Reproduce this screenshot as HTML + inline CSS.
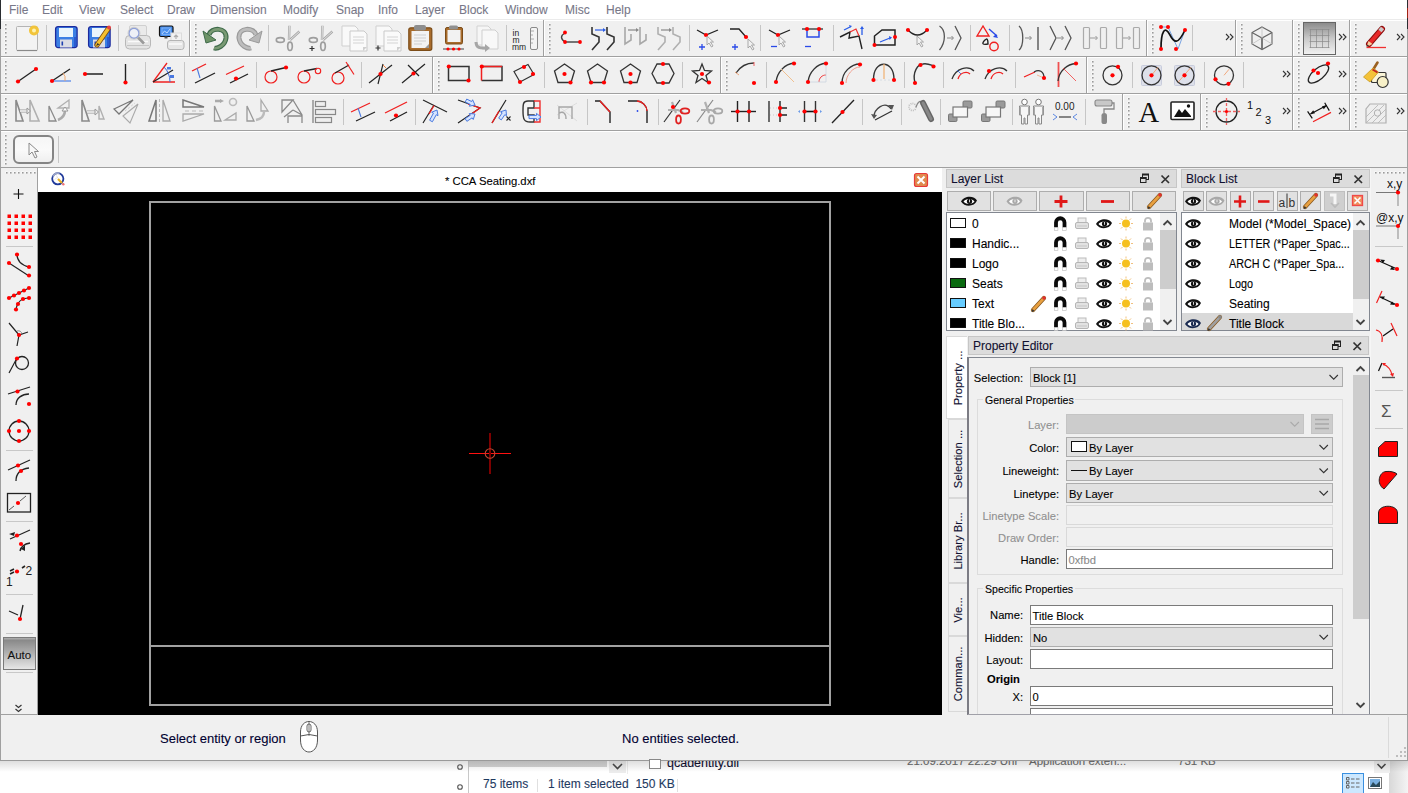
<!DOCTYPE html>
<html><head><meta charset="utf-8"><style>
html,body{margin:0;padding:0;width:1408px;height:793px;overflow:hidden;background:#fff;font-family:"Liberation Sans", sans-serif;-webkit-text-stroke:0.1px currentColor;}
#root{position:relative;width:1408px;height:793px;overflow:hidden;}
svg text{font-family:"Liberation Sans",sans-serif;}
</style></head><body><div id="root">
<div style="position:absolute;left:0px;top:0px;width:1408px;height:19px;background:#fff"></div><div style="position:absolute;left:0px;top:0px;width:1px;height:29px;background:#2a2d31"></div><div style="position:absolute;left:9px;top:3px;white-space:nowrap;font-size:12px;line-height:14px;color:#787888;">File</div><div style="position:absolute;left:42px;top:3px;white-space:nowrap;font-size:12px;line-height:14px;color:#787888;">Edit</div><div style="position:absolute;left:79px;top:3px;white-space:nowrap;font-size:12px;line-height:14px;color:#787888;">View</div><div style="position:absolute;left:120px;top:3px;white-space:nowrap;font-size:12px;line-height:14px;color:#787888;">Select</div><div style="position:absolute;left:167px;top:3px;white-space:nowrap;font-size:12px;line-height:14px;color:#787888;">Draw</div><div style="position:absolute;left:210px;top:3px;white-space:nowrap;font-size:12px;line-height:14px;color:#787888;">Dimension</div><div style="position:absolute;left:283px;top:3px;white-space:nowrap;font-size:12px;line-height:14px;color:#787888;">Modify</div><div style="position:absolute;left:336px;top:3px;white-space:nowrap;font-size:12px;line-height:14px;color:#787888;">Snap</div><div style="position:absolute;left:378px;top:3px;white-space:nowrap;font-size:12px;line-height:14px;color:#787888;">Info</div><div style="position:absolute;left:415px;top:3px;white-space:nowrap;font-size:12px;line-height:14px;color:#787888;">Layer</div><div style="position:absolute;left:459px;top:3px;white-space:nowrap;font-size:12px;line-height:14px;color:#787888;">Block</div><div style="position:absolute;left:505px;top:3px;white-space:nowrap;font-size:12px;line-height:14px;color:#787888;">Window</div><div style="position:absolute;left:565px;top:3px;white-space:nowrap;font-size:12px;line-height:14px;color:#787888;">Misc</div><div style="position:absolute;left:606px;top:3px;white-space:nowrap;font-size:12px;line-height:14px;color:#787888;">Help</div><div style="position:absolute;left:1px;top:19px;width:1407px;height:149px;background:#f0f0f0"></div><div style="position:absolute;left:1px;top:56px;width:1406px;height:1px;background:#a0a0a0"></div><div style="position:absolute;left:1px;top:57px;width:1406px;height:1px;background:#fff"></div><div style="position:absolute;left:1px;top:93px;width:1406px;height:1px;background:#a0a0a0"></div><div style="position:absolute;left:1px;top:94px;width:1406px;height:1px;background:#fff"></div><div style="position:absolute;left:1px;top:130px;width:1406px;height:1px;background:#a0a0a0"></div><div style="position:absolute;left:1px;top:131px;width:1406px;height:1px;background:#fff"></div><div style="position:absolute;left:1px;top:167px;width:1406px;height:1px;background:#a0a0a0"></div><div style="position:absolute;left:1px;top:168px;width:1406px;height:1px;background:#fff"></div><div style="position:absolute;left:1px;top:19px;width:1406px;height:1px;background:#ebebeb"></div><div style="position:absolute;left:1px;top:20px;width:1406px;height:1px;background:#fff"></div><div style="position:absolute;left:0px;top:29px;width:1px;height:731px;background:#a0a0a0"></div><div style="position:absolute;left:1407px;top:0px;width:1px;height:760px;background:#a0a0a0"></div><div style="position:absolute;left:46px;top:25px;width:1px;height:26px;background:#c6c6c6"></div><div style="position:absolute;left:118px;top:25px;width:1px;height:26px;background:#c6c6c6"></div><div style="position:absolute;left:189px;top:20px;width:1px;height:36px;background:#a0a0a0"></div><div style="position:absolute;left:190px;top:20px;width:1px;height:36px;background:#fff"></div><div style="position:absolute;left:268px;top:25px;width:1px;height:26px;background:#c6c6c6"></div><div style="position:absolute;left:506px;top:25px;width:1px;height:26px;background:#c6c6c6"></div><div style="position:absolute;left:543px;top:20px;width:1px;height:36px;background:#a0a0a0"></div><div style="position:absolute;left:544px;top:20px;width:1px;height:36px;background:#fff"></div><div style="position:absolute;left:689px;top:25px;width:1px;height:26px;background:#c6c6c6"></div><div style="position:absolute;left:760px;top:25px;width:1px;height:26px;background:#c6c6c6"></div><div style="position:absolute;left:833px;top:25px;width:1px;height:26px;background:#c6c6c6"></div><div style="position:absolute;left:970px;top:25px;width:1px;height:26px;background:#c6c6c6"></div><div style="position:absolute;left:1009px;top:25px;width:1px;height:26px;background:#c6c6c6"></div><div style="position:absolute;left:1146px;top:20px;width:1px;height:36px;background:#a0a0a0"></div><div style="position:absolute;left:1147px;top:20px;width:1px;height:36px;background:#fff"></div><div style="position:absolute;left:1192px;top:25px;width:1px;height:26px;background:#c6c6c6"></div><div style="position:absolute;left:1235px;top:20px;width:1px;height:36px;background:#a0a0a0"></div><div style="position:absolute;left:1236px;top:20px;width:1px;height:36px;background:#fff"></div><div style="position:absolute;left:1292px;top:20px;width:1px;height:36px;background:#a0a0a0"></div><div style="position:absolute;left:1293px;top:20px;width:1px;height:36px;background:#fff"></div><div style="position:absolute;left:1349px;top:20px;width:1px;height:36px;background:#a0a0a0"></div><div style="position:absolute;left:1350px;top:20px;width:1px;height:36px;background:#fff"></div><div style="position:absolute;left:145px;top:62px;width:1px;height:26px;background:#c6c6c6"></div><div style="position:absolute;left:184px;top:62px;width:1px;height:26px;background:#c6c6c6"></div><div style="position:absolute;left:256px;top:62px;width:1px;height:26px;background:#c6c6c6"></div><div style="position:absolute;left:361px;top:62px;width:1px;height:26px;background:#c6c6c6"></div><div style="position:absolute;left:432px;top:57px;width:1px;height:36px;background:#a0a0a0"></div><div style="position:absolute;left:433px;top:57px;width:1px;height:36px;background:#fff"></div><div style="position:absolute;left:544px;top:62px;width:1px;height:26px;background:#c6c6c6"></div><div style="position:absolute;left:682px;top:62px;width:1px;height:26px;background:#c6c6c6"></div><div style="position:absolute;left:720px;top:57px;width:1px;height:36px;background:#a0a0a0"></div><div style="position:absolute;left:721px;top:57px;width:1px;height:36px;background:#fff"></div><div style="position:absolute;left:766px;top:62px;width:1px;height:26px;background:#c6c6c6"></div><div style="position:absolute;left:904px;top:62px;width:1px;height:26px;background:#c6c6c6"></div><div style="position:absolute;left:943px;top:62px;width:1px;height:26px;background:#c6c6c6"></div><div style="position:absolute;left:1015px;top:62px;width:1px;height:26px;background:#c6c6c6"></div><div style="position:absolute;left:1086px;top:57px;width:1px;height:36px;background:#a0a0a0"></div><div style="position:absolute;left:1087px;top:57px;width:1px;height:36px;background:#fff"></div><div style="position:absolute;left:1132px;top:62px;width:1px;height:26px;background:#c6c6c6"></div><div style="position:absolute;left:1204px;top:62px;width:1px;height:26px;background:#c6c6c6"></div><div style="position:absolute;left:1243px;top:62px;width:1px;height:26px;background:#c6c6c6"></div><div style="position:absolute;left:1292px;top:57px;width:1px;height:36px;background:#a0a0a0"></div><div style="position:absolute;left:1293px;top:57px;width:1px;height:36px;background:#fff"></div><div style="position:absolute;left:1349px;top:57px;width:1px;height:36px;background:#a0a0a0"></div><div style="position:absolute;left:1350px;top:57px;width:1px;height:36px;background:#fff"></div><div style="position:absolute;left:343px;top:99px;width:1px;height:26px;background:#c6c6c6"></div><div style="position:absolute;left:415px;top:99px;width:1px;height:26px;background:#c6c6c6"></div><div style="position:absolute;left:587px;top:99px;width:1px;height:26px;background:#c6c6c6"></div><div style="position:absolute;left:658px;top:99px;width:1px;height:26px;background:#c6c6c6"></div><div style="position:absolute;left:862px;top:99px;width:1px;height:26px;background:#c6c6c6"></div><div style="position:absolute;left:901px;top:99px;width:1px;height:26px;background:#c6c6c6"></div><div style="position:absolute;left:940px;top:99px;width:1px;height:26px;background:#c6c6c6"></div><div style="position:absolute;left:1012px;top:99px;width:1px;height:26px;background:#c6c6c6"></div><div style="position:absolute;left:1085px;top:99px;width:1px;height:26px;background:#c6c6c6"></div><div style="position:absolute;left:1122px;top:94px;width:1px;height:36px;background:#a0a0a0"></div><div style="position:absolute;left:1123px;top:94px;width:1px;height:36px;background:#fff"></div><div style="position:absolute;left:1200px;top:94px;width:1px;height:36px;background:#a0a0a0"></div><div style="position:absolute;left:1201px;top:94px;width:1px;height:36px;background:#fff"></div><div style="position:absolute;left:1292px;top:94px;width:1px;height:36px;background:#a0a0a0"></div><div style="position:absolute;left:1293px;top:94px;width:1px;height:36px;background:#fff"></div><div style="position:absolute;left:1349px;top:94px;width:1px;height:36px;background:#a0a0a0"></div><div style="position:absolute;left:1350px;top:94px;width:1px;height:36px;background:#fff"></div><div style="position:absolute;left:13px;top:135px;width:41px;height:29px;box-sizing:border-box;border:2px solid #858585;border-radius:6px;background:linear-gradient(#f6f6f6,#fafafa 50%,#efefef)"></div><div style="position:absolute;left:58px;top:136px;width:1px;height:27px;background:#c6c6c6"></div><div style="position:absolute;left:1px;top:168px;width:36px;height:547px;background:#f0f0f0"></div><div style="position:absolute;left:37px;top:168px;width:1px;height:547px;background:#a0a0a0"></div><div style="position:absolute;left:6px;top:246px;width:27px;height:1px;background:#c8c8c8"></div><div style="position:absolute;left:6px;top:450px;width:27px;height:1px;background:#c8c8c8"></div><div style="position:absolute;left:6px;top:521px;width:27px;height:1px;background:#c8c8c8"></div><div style="position:absolute;left:6px;top:594px;width:27px;height:1px;background:#c8c8c8"></div><div style="position:absolute;left:6px;top:633px;width:27px;height:1px;background:#c8c8c8"></div><div style="position:absolute;left:3px;top:637px;width:33px;height:33px;box-sizing:border-box;border:1px solid #7a7a7a;background:linear-gradient(#b0b0b0,#8a8a8a 8%,#a8a8a8 40%,#e6e6e6)"></div><div style="position:absolute;left:7.5px;top:648.5px;white-space:nowrap;font-size:11.5px;line-height:13.5px;color:#111;">Auto</div><div style="position:absolute;left:6px;top:672px;width:27px;height:1px;background:#c8c8c8"></div><div style="position:absolute;left:1px;top:714px;width:37px;height:1px;background:#a0a0a0"></div><div style="position:absolute;left:38px;top:168px;width:904px;height:24px;background:#fff"></div><div style="position:absolute;left:942px;top:168px;width:4px;height:547px;background:#f0f0f0"></div><div style="position:absolute;left:38px;top:192px;width:904px;height:523px;background:#000"></div><div style="position:absolute;left:445px;top:175px;white-space:nowrap;font-size:11.3px;line-height:13.3px;color:#000;">* CCA Seating.dxf</div><div style="position:absolute;left:149px;top:201px;width:682px;height:505px;box-sizing:border-box;border:2px solid #a2a2a2"></div><div style="position:absolute;left:151px;top:645px;width:678px;height:2px;background:#a2a2a2"></div><div style="position:absolute;left:469px;top:453px;width:42px;height:1px;background:#ff1010"></div><div style="position:absolute;left:489px;top:433px;width:2px;height:41px;background:#7c0000"></div><div style="position:absolute;left:942px;top:168px;width:429px;height:547px;background:#f0f0f0"></div><div style="position:absolute;left:946px;top:169px;width:231px;height:19px;box-sizing:border-box;border:1px solid #c6c6c6;background:#dcdcdc"></div><div style="position:absolute;left:951px;top:172px;white-space:nowrap;font-size:12px;line-height:14px;color:#101030;">Layer List</div><div style="position:absolute;left:1181px;top:169px;width:189px;height:19px;box-sizing:border-box;border:1px solid #c6c6c6;background:#dcdcdc"></div><div style="position:absolute;left:1186px;top:172px;white-space:nowrap;font-size:12px;line-height:14px;color:#101030;">Block List</div><div style="position:absolute;left:947px;top:191px;width:44px;height:20px;box-sizing:border-box;border:1px solid #adadad;background:#e1e1e1"></div><div style="position:absolute;left:993px;top:191px;width:44px;height:20px;box-sizing:border-box;border:1px solid #adadad;background:#e1e1e1"></div><div style="position:absolute;left:1039px;top:191px;width:45px;height:20px;box-sizing:border-box;border:1px solid #adadad;background:#e1e1e1"></div><div style="position:absolute;left:1086px;top:191px;width:44px;height:20px;box-sizing:border-box;border:1px solid #adadad;background:#e1e1e1"></div><div style="position:absolute;left:1132px;top:191px;width:44px;height:20px;box-sizing:border-box;border:1px solid #adadad;background:#e1e1e1"></div><div style="position:absolute;left:946px;top:212px;width:231px;height:119px;box-sizing:border-box;border:1px solid #828790;background:#fff"></div><div style="position:absolute;left:1160px;top:213px;width:16px;height:117px;background:#f0f0f0"></div><div style="position:absolute;left:1160px;top:230px;width:16px;height:59px;background:#cdcdcd"></div><div style="position:absolute;left:972px;top:216.5px;white-space:nowrap;font-size:12px;line-height:14px;color:#000;">0</div><div style="position:absolute;left:972px;top:236.5px;white-space:nowrap;font-size:12px;line-height:14px;color:#000;">Handic...</div><div style="position:absolute;left:972px;top:256.5px;white-space:nowrap;font-size:12px;line-height:14px;color:#000;">Logo</div><div style="position:absolute;left:972px;top:276.5px;white-space:nowrap;font-size:12px;line-height:14px;color:#000;">Seats</div><div style="position:absolute;left:972px;top:296.5px;white-space:nowrap;font-size:12px;line-height:14px;color:#000;">Text</div><div style="position:absolute;left:972px;top:316.5px;white-space:nowrap;font-size:12px;line-height:14px;color:#000;">Title Blo...</div><div style="position:absolute;left:1183px;top:191px;width:21px;height:20px;box-sizing:border-box;border:1px solid #adadad;background:#e1e1e1"></div><div style="position:absolute;left:1206px;top:191px;width:21px;height:20px;box-sizing:border-box;border:1px solid #adadad;background:#e1e1e1"></div><div style="position:absolute;left:1230px;top:191px;width:21px;height:20px;box-sizing:border-box;border:1px solid #adadad;background:#e1e1e1"></div><div style="position:absolute;left:1253px;top:191px;width:21px;height:20px;box-sizing:border-box;border:1px solid #adadad;background:#e1e1e1"></div><div style="position:absolute;left:1277px;top:191px;width:21px;height:20px;box-sizing:border-box;border:1px solid #adadad;background:#e1e1e1"></div><div style="position:absolute;left:1300px;top:191px;width:21px;height:20px;box-sizing:border-box;border:1px solid #adadad;background:#e1e1e1"></div><div style="position:absolute;left:1324px;top:191px;width:21px;height:20px;box-sizing:border-box;border:1px solid #c0c0c0;background:#cfcfcf"></div><div style="position:absolute;left:1347px;top:191px;width:21px;height:20px;box-sizing:border-box;border:1px solid #adadad;background:#e1e1e1"></div><div style="position:absolute;left:1181px;top:212px;width:189px;height:119px;box-sizing:border-box;border:1px solid #828790;background:#fff"></div><div style="position:absolute;left:1353px;top:213px;width:16px;height:117px;background:#f0f0f0"></div><div style="position:absolute;left:1353px;top:230px;width:16px;height:69px;background:#cdcdcd"></div><div style="position:absolute;left:1182px;top:313px;width:171px;height:17px;background:#d9d9d9"></div><div style="position:absolute;left:1229px;top:216.5px;white-space:nowrap;font-size:12px;line-height:14px;color:#000;">Model (*Model_Space)</div><div style="position:absolute;left:1229px;top:236.5px;white-space:nowrap;font-size:12px;line-height:14px;color:#000;transform:scaleX(0.9);transform-origin:0 0;">LETTER (*Paper_Spac...</div><div style="position:absolute;left:1229px;top:256.5px;white-space:nowrap;font-size:12px;line-height:14px;color:#000;transform:scaleX(0.9);transform-origin:0 0;">ARCH C (*Paper_Spa...</div><div style="position:absolute;left:1229px;top:276.5px;white-space:nowrap;font-size:12px;line-height:14px;color:#000;transform:scaleX(0.9);transform-origin:0 0;">Logo</div><div style="position:absolute;left:1229px;top:296.5px;white-space:nowrap;font-size:12px;line-height:14px;color:#000;">Seating</div><div style="position:absolute;left:1229px;top:316.5px;white-space:nowrap;font-size:12px;line-height:14px;color:#000;">Title Block</div><div style="position:absolute;left:946px;top:336px;width:21px;height:83px;box-sizing:border-box;border:1px solid #d9d9d9;border-right:none;background:#fff"></div><div style="position:absolute;left:957.5px;top:377.5px;width:0;height:0"><div style="position:absolute;left:0;top:0;transform:translate(-50%,-50%) rotate(-90deg);white-space:nowrap;font-size:11.2px;line-height:13px;color:#101030">Property ...</div></div><div style="position:absolute;left:948px;top:419px;width:19px;height:79px;box-sizing:border-box;border:1px solid #d9d9d9;border-right:none;background:#f0f0f0"></div><div style="position:absolute;left:957.5px;top:458.5px;width:0;height:0"><div style="position:absolute;left:0;top:0;transform:translate(-50%,-50%) rotate(-90deg);white-space:nowrap;font-size:11.2px;line-height:13px;color:#101030">Selection ...</div></div><div style="position:absolute;left:948px;top:498px;width:19px;height:85px;box-sizing:border-box;border:1px solid #d9d9d9;border-right:none;background:#f0f0f0"></div><div style="position:absolute;left:957.5px;top:540.5px;width:0;height:0"><div style="position:absolute;left:0;top:0;transform:translate(-50%,-50%) rotate(-90deg);white-space:nowrap;font-size:11.2px;line-height:13px;color:#101030">Library Br...</div></div><div style="position:absolute;left:948px;top:583px;width:19px;height:53px;box-sizing:border-box;border:1px solid #d9d9d9;border-right:none;background:#f0f0f0"></div><div style="position:absolute;left:957.5px;top:609.5px;width:0;height:0"><div style="position:absolute;left:0;top:0;transform:translate(-50%,-50%) rotate(-90deg);white-space:nowrap;font-size:11.2px;line-height:13px;color:#101030">Vie...</div></div><div style="position:absolute;left:948px;top:636px;width:19px;height:76px;box-sizing:border-box;border:1px solid #d9d9d9;border-right:none;background:#f0f0f0"></div><div style="position:absolute;left:957.5px;top:674.0px;width:0;height:0"><div style="position:absolute;left:0;top:0;transform:translate(-50%,-50%) rotate(-90deg);white-space:nowrap;font-size:11.2px;line-height:13px;color:#101030">Comman...</div></div><div style="position:absolute;left:968px;top:336px;width:401px;height:19px;box-sizing:border-box;border:1px solid #c6c6c6;background:#dcdcdc"></div><div style="position:absolute;left:973px;top:339px;white-space:nowrap;font-size:12px;line-height:14px;color:#101030;">Property Editor</div><div style="position:absolute;left:967px;top:357px;width:403px;height:358px;box-sizing:border-box;border:1px solid #828790;border-left:2px solid #7c7c84;border-bottom:1px solid #a0a0a8;background:#f0f0f0"></div><div style="position:absolute;left:1353px;top:358px;width:16px;height:356px;background:#f0f0f0"></div><div style="position:absolute;left:1353px;top:375px;width:16px;height:244px;background:#cdcdcd"></div><div style="position:absolute;right:385px;top:372px;white-space:nowrap;font-size:11.2px;line-height:13px;color:#000;">Selection:</div><div style="position:absolute;left:1030px;top:367px;width:313px;height:20px;box-sizing:border-box;border:1px solid #adadad;background:#e1e1e1"></div><div style="position:absolute;left:1033px;top:372px;white-space:nowrap;font-size:11.2px;line-height:13.2px;color:#000;">Block [1]</div><div style="position:absolute;left:977px;top:399px;width:366px;height:176px;box-sizing:border-box;border:1px solid #dcdcdc"></div><div style="position:absolute;left:983px;top:392px;width:92px;height:14px;background:#f0f0f0"></div><div style="position:absolute;left:985px;top:394px;white-space:nowrap;font-size:11.2px;line-height:13.2px;color:#000;transform:scaleX(0.945);transform-origin:0 0;">General Properties</div><div style="position:absolute;right:349px;top:419px;white-space:nowrap;font-size:11.2px;line-height:13px;color:#909090;">Layer:</div><div style="position:absolute;left:1066px;top:414px;width:238px;height:20px;box-sizing:border-box;border:1px solid #c4c4c4;background:#cccccc"></div><div style="position:absolute;left:1311px;top:414px;width:22px;height:20px;box-sizing:border-box;border:1px solid #c4c4c4;background:#cccccc"></div><div style="position:absolute;right:349px;top:442px;white-space:nowrap;font-size:11.2px;line-height:13px;color:#000;">Color:</div><div style="position:absolute;left:1066px;top:437px;width:267px;height:20px;box-sizing:border-box;border:1px solid #adadad;background:#e1e1e1"></div><div style="position:absolute;left:1089px;top:442px;white-space:nowrap;font-size:11.2px;line-height:13.2px;color:#000;">By Layer</div><div style="position:absolute;right:349px;top:465px;white-space:nowrap;font-size:11.2px;line-height:13px;color:#000;">Lineweight:</div><div style="position:absolute;left:1066px;top:460px;width:267px;height:21px;box-sizing:border-box;border:1px solid #adadad;background:#e1e1e1"></div><div style="position:absolute;left:1089px;top:465px;white-space:nowrap;font-size:11.2px;line-height:13.2px;color:#000;">By Layer</div><div style="position:absolute;right:349px;top:488px;white-space:nowrap;font-size:11.2px;line-height:13px;color:#000;">Linetype:</div><div style="position:absolute;left:1066px;top:483px;width:267px;height:20px;box-sizing:border-box;border:1px solid #adadad;background:#e1e1e1"></div><div style="position:absolute;left:1069px;top:488px;white-space:nowrap;font-size:11.2px;line-height:13.2px;color:#000;">By Layer</div><div style="position:absolute;right:349px;top:510px;white-space:nowrap;font-size:11.2px;line-height:13px;color:#909090;">Linetype Scale:</div><div style="position:absolute;left:1066px;top:505px;width:267px;height:20px;box-sizing:border-box;border:1px solid #d9d9d9;background:#f0f0f0"></div><div style="position:absolute;right:349px;top:532px;white-space:nowrap;font-size:11.2px;line-height:13px;color:#909090;">Draw Order:</div><div style="position:absolute;left:1066px;top:527px;width:267px;height:20px;box-sizing:border-box;border:1px solid #d9d9d9;background:#f0f0f0"></div><div style="position:absolute;right:349px;top:554px;white-space:nowrap;font-size:11.2px;line-height:13px;color:#000;">Handle:</div><div style="position:absolute;left:1066px;top:549px;width:267px;height:20px;box-sizing:border-box;border:1px solid #7a7a7a;background:#fff"></div><div style="position:absolute;left:1068.5px;top:554px;white-space:nowrap;font-size:11.2px;line-height:13.2px;color:#8a8a8a;">0xfbd</div><div style="position:absolute;left:977px;top:588px;width:366px;height:130px;box-sizing:border-box;border:1px solid #dcdcdc;border-bottom:none"></div><div style="position:absolute;left:983px;top:581px;width:92px;height:14px;background:#f0f0f0"></div><div style="position:absolute;left:985px;top:583px;white-space:nowrap;font-size:11.2px;line-height:13.2px;color:#000;transform:scaleX(0.945);transform-origin:0 0;">Specific Properties</div><div style="position:absolute;right:385px;top:609px;white-space:nowrap;font-size:11.2px;line-height:13px;color:#000;">Name:</div><div style="position:absolute;left:1030px;top:605px;width:303px;height:20px;box-sizing:border-box;border:1px solid #7a7a7a;background:#fff"></div><div style="position:absolute;left:1032.5px;top:610px;white-space:nowrap;font-size:11.2px;line-height:13.2px;color:#000;">Title Block</div><div style="position:absolute;right:385px;top:632px;white-space:nowrap;font-size:11.2px;line-height:13px;color:#000;">Hidden:</div><div style="position:absolute;left:1030px;top:627px;width:303px;height:20px;box-sizing:border-box;border:1px solid #adadad;background:#e1e1e1"></div><div style="position:absolute;left:1033px;top:632px;white-space:nowrap;font-size:11.2px;line-height:13.2px;color:#000;">No</div><div style="position:absolute;right:385px;top:654px;white-space:nowrap;font-size:11.2px;line-height:13px;color:#000;">Layout:</div><div style="position:absolute;left:1030px;top:649px;width:303px;height:20px;box-sizing:border-box;border:1px solid #7a7a7a;background:#fff"></div><div style="position:absolute;left:987px;top:673px;white-space:nowrap;font-size:11.2px;line-height:13.2px;color:#000;font-weight:bold">Origin</div><div style="position:absolute;right:385px;top:691px;white-space:nowrap;font-size:11.2px;line-height:13px;color:#000;">X:</div><div style="position:absolute;left:1030px;top:686px;width:303px;height:20px;box-sizing:border-box;border:1px solid #7a7a7a;background:#fff"></div><div style="position:absolute;left:1032.5px;top:691px;white-space:nowrap;font-size:11.2px;line-height:13.2px;color:#000;">0</div><div style="position:absolute;left:1030px;top:708px;width:303px;height:10px;box-sizing:border-box;border:1px solid #7a7a7a;background:#fff"></div><div style="position:absolute;left:968px;top:714px;width:402px;height:1px;background:#a0a0a8"></div><div style="position:absolute;left:1371px;top:168px;width:36px;height:547px;background:#f0f0f0"></div><div style="position:absolute;left:1370px;top:168px;width:1px;height:547px;background:#f6f6f6"></div><div style="position:absolute;left:1375px;top:246px;width:28px;height:1px;background:#c8c8c8"></div><div style="position:absolute;left:1375px;top:390px;width:28px;height:1px;background:#c8c8c8"></div><div style="position:absolute;left:1375px;top:428px;width:28px;height:1px;background:#c8c8c8"></div><div style="position:absolute;left:1370px;top:714px;width:37px;height:1px;background:#a0a0a0"></div><div style="position:absolute;left:1px;top:715px;width:1406px;height:45px;background:#f0f0f0"></div><div style="position:absolute;left:0px;top:760px;width:1408px;height:1px;background:#9a9a9a"></div><div style="position:absolute;left:160px;top:731px;white-space:nowrap;font-size:13px;line-height:15px;color:#000030;">Select entity or region</div><div style="position:absolute;left:622px;top:731px;white-space:nowrap;font-size:13px;line-height:15px;color:#000030;">No entities selected.</div><div style="position:absolute;left:1388px;top:717px;width:1px;height:41px;background:#dadada"></div><div style="position:absolute;left:0;top:761px;width:1408px;height:32px;overflow:hidden"><div style="position:absolute;left:0px;top:-1px;width:1408px;height:33px;background:#fff"></div><div style="position:absolute;left:469px;top:-1px;width:138px;height:7px;background:#d4d4d4"></div><div style="position:absolute;left:609px;top:-1px;width:17px;height:13px;background:#ececec"></div><div style="position:absolute;left:468px;top:-1px;width:1px;height:33px;background:#c8c8c8"></div><div style="position:absolute;left:627px;top:-1px;width:1px;height:14px;background:#ececec"></div><div style="position:absolute;left:667px;top:-5px;white-space:nowrap;font-size:12.5px;line-height:14.5px;color:#101030">qcadentity.dll</div><div style="position:absolute;left:907px;top:-6px;white-space:nowrap;font-size:11.5px;line-height:13.5px;color:#6d6d6d">21.09.2017 22:29 Uhr</div><div style="position:absolute;left:1029px;top:-6px;white-space:nowrap;font-size:11.5px;line-height:13.5px;color:#6d6d6d">Application exten...</div><div style="position:absolute;left:1178px;top:-6px;white-space:nowrap;font-size:11.5px;line-height:13.5px;color:#6d6d6d">731 KB</div><div style="position:absolute;left:483px;top:16px;white-space:nowrap;font-size:12px;line-height:14px;color:#1e3a5f">75 items</div><div style="position:absolute;left:537px;top:18px;width:1px;height:13px;background:#e0e0e0"></div><div style="position:absolute;left:548px;top:16px;white-space:nowrap;font-size:12px;line-height:14px;color:#1e3a5f">1 item selected&nbsp; 150 KB</div><div style="position:absolute;left:677px;top:18px;width:1px;height:13px;background:#e0e0e0"></div><div style="position:absolute;left:1389px;top:-1px;width:19px;height:33px;background:linear-gradient(90deg,#d8d8d8,#f4f4f4)"></div><div style="position:absolute;left:1374px;top:-1px;width:16px;height:13px;background:#efefef"></div><div style="position:absolute;left:0px;top:-1px;width:1408px;height:12px;background:linear-gradient(rgba(0,0,0,0.14),rgba(0,0,0,0))"></div></div><div style="position:absolute;left:1407px;top:0px;width:1px;height:29px;background:#2a2d31"></div><div style="position:absolute;left:1407px;top:8px;width:1px;height:10px;background:#a02414"></div>
<svg width="1408" height="793" style="position:absolute;left:0;top:0"><rect x="4.5" y="23.5" width="2" height="2" fill="#fff"/><rect x="5" y="24" width="1.6" height="1.6" fill="#9a9a9a"/><rect x="4.5" y="27.5" width="2" height="2" fill="#fff"/><rect x="5" y="28" width="1.6" height="1.6" fill="#9a9a9a"/><rect x="4.5" y="31.5" width="2" height="2" fill="#fff"/><rect x="5" y="32" width="1.6" height="1.6" fill="#9a9a9a"/><rect x="4.5" y="35.5" width="2" height="2" fill="#fff"/><rect x="5" y="36" width="1.6" height="1.6" fill="#9a9a9a"/><rect x="4.5" y="39.5" width="2" height="2" fill="#fff"/><rect x="5" y="40" width="1.6" height="1.6" fill="#9a9a9a"/><rect x="4.5" y="43.5" width="2" height="2" fill="#fff"/><rect x="5" y="44" width="1.6" height="1.6" fill="#9a9a9a"/><rect x="4.5" y="47.5" width="2" height="2" fill="#fff"/><rect x="5" y="48" width="1.6" height="1.6" fill="#9a9a9a"/><rect x="4.5" y="51.5" width="2" height="2" fill="#fff"/><rect x="5" y="52" width="1.6" height="1.6" fill="#9a9a9a"/><g transform="translate(15,25)"><rect x="1.5" y="1.5" width="21" height="24" rx="1" fill="#f3f3f3" stroke="#b4b4b4"/><line x1="2" y1="25.5" x2="22" y2="25.5" stroke="#8a8a8a" stroke-width="1.2"/><circle cx="19" cy="5.5" r="5" fill="#f2c43a"/><circle cx="19" cy="5.5" r="2" fill="#fff3b0"/></g><g transform="translate(55,25)"><rect x="0.6" y="1.6" width="21.5" height="21" rx="2.5" fill="#3b7fe4" stroke="#1c2a9e" stroke-width="1.3"/><rect x="4" y="3" width="14" height="9" fill="#eaf5fc"/><rect x="5" y="14.5" width="12" height="8" fill="#dcdce4"/><rect x="6.5" y="16.5" width="1.6" height="4" fill="#2040b0"/><rect x="19" y="12" width="2" height="10" fill="#2a5ad0"/></g><g transform="translate(88,25)"><rect x="0.6" y="1.6" width="21.5" height="21" rx="2.5" fill="#3b7fe4" stroke="#1c2a9e" stroke-width="1.3"/><rect x="4" y="3" width="14" height="9" fill="#eaf5fc"/><rect x="5" y="14.5" width="12" height="8" fill="#dcdce4"/><rect x="6.5" y="16.5" width="1.6" height="4" fill="#2040b0"/><rect x="19" y="12" width="2" height="10" fill="#2a5ad0"/><path d="M9 20 L20 4" stroke="#7a4a10" stroke-width="5" stroke-linecap="round"/><path d="M9 20 L20 4" stroke="#f4c030" stroke-width="3.4" stroke-linecap="round"/><circle cx="21" cy="2.5" r="2" fill="#e84040"/><path d="M8 21 l1.5 -3 l2 1.5z" fill="#333"/></g><g transform="translate(125,25)"><rect x="4.5" y="0.5" width="17" height="12" rx="1.5" fill="#eaeaea" stroke="#d0d0d0"/><rect x="0.5" y="10.5" width="25" height="13.5" rx="4" fill="#e4e4e4" stroke="#b8b8b8"/><path d="M3 16.5 h20" stroke="#fafafa" stroke-width="1.5"/><path d="M2 20.5 h22" stroke="#c4c4c4" stroke-width="1"/><line x1="12" y1="11.5" x2="19" y2="18.5" stroke="#9a9a9a" stroke-width="2.6"/><circle cx="9" cy="8.2" r="5" fill="#eef0f6" stroke="#8fa0d8" stroke-width="1.4"/><circle cx="9" cy="8.2" r="6" fill="none" stroke="#c8c8c8" stroke-width="0.8"/></g><g transform="translate(159,25)"><rect x="0.5" y="1" width="13.5" height="10.5" rx="1.5" fill="#4a90ee" stroke="#111" stroke-width="1.2"/><path d="M3 9 L5.5 6 L8 8 L11 4" stroke="#c8e0ff" stroke-width="0.9" fill="none"/><rect x="3" y="3" width="8.5" height="6.5" fill="none" stroke="#9cc4f8" stroke-width="0.6"/><rect x="5.5" y="11.5" width="3" height="2" fill="#555"/><rect x="12" y="8" width="10.5" height="8" fill="#f2f2f2" stroke="#dcdcdc"/><path d="M17 14 V10.5 M15 12 l2 -2 l2 2" stroke="#b0b0b0" stroke-width="1.2" fill="none"/><rect x="8.5" y="15.5" width="16.5" height="9" rx="2.5" fill="#e6e6e6" stroke="#b4b4b4"/><path d="M10 19 h13" stroke="#fafafa" stroke-width="1.5"/></g><rect x="194.5" y="23.5" width="2" height="2" fill="#fff"/><rect x="195" y="24" width="1.6" height="1.6" fill="#9a9a9a"/><rect x="194.5" y="27.5" width="2" height="2" fill="#fff"/><rect x="195" y="28" width="1.6" height="1.6" fill="#9a9a9a"/><rect x="194.5" y="31.5" width="2" height="2" fill="#fff"/><rect x="195" y="32" width="1.6" height="1.6" fill="#9a9a9a"/><rect x="194.5" y="35.5" width="2" height="2" fill="#fff"/><rect x="195" y="36" width="1.6" height="1.6" fill="#9a9a9a"/><rect x="194.5" y="39.5" width="2" height="2" fill="#fff"/><rect x="195" y="40" width="1.6" height="1.6" fill="#9a9a9a"/><rect x="194.5" y="43.5" width="2" height="2" fill="#fff"/><rect x="195" y="44" width="1.6" height="1.6" fill="#9a9a9a"/><rect x="194.5" y="47.5" width="2" height="2" fill="#fff"/><rect x="195" y="48" width="1.6" height="1.6" fill="#9a9a9a"/><rect x="194.5" y="51.5" width="2" height="2" fill="#fff"/><rect x="195" y="52" width="1.6" height="1.6" fill="#9a9a9a"/><g transform="translate(203,25)"><path d="M6 10 C 8 2, 24 2, 23 13 C 22 21, 14 24, 11 23" stroke="#3e6a4a" stroke-width="5" fill="none"/><path d="M6 10 C 8 2, 24 2, 23 13 C 22 21, 14 24, 11 23" stroke="#7a9a74" stroke-width="2.6" fill="none"/><path d="M0 6 L3 18 L13 15z" fill="#6e9468" stroke="#3e6a4a" stroke-width="1"/></g><g transform="translate(236,25)"><path d="M20 10 C 18 2, 2 2, 3 13 C 4 21, 12 24, 15 23" stroke="#9a9a9a" stroke-width="5" fill="none"/><path d="M20 10 C 18 2, 2 2, 3 13 C 4 21, 12 24, 15 23" stroke="#bdbdbd" stroke-width="2.6" fill="none"/><path d="M26 6 L23 18 L13 15z" fill="#b8b8b8" stroke="#9a9a9a" stroke-width="1"/></g><g transform="translate(276,25)"><path d="M13.4 0.8 L13 15 M23.4 6.5 L14 15" stroke="#a8a8a8" stroke-width="2.4"/><path d="M13.4 0.8 L13 15 M23.4 6.5 L14 15" stroke="#f0f0f0" stroke-width="0.8"/><ellipse cx="4.3" cy="15" rx="4" ry="2.4" stroke="#9e9e9e" stroke-width="1.7" fill="none"/><ellipse cx="14" cy="21.3" rx="2.3" ry="4.2" stroke="#9e9e9e" stroke-width="1.7" fill="none"/></g><g transform="translate(309,25)"><path d="M13.4 0.8 L13 15 M23.4 6.5 L14 15" stroke="#a8a8a8" stroke-width="2.4"/><path d="M13.4 0.8 L13 15 M23.4 6.5 L14 15" stroke="#f0f0f0" stroke-width="0.8"/><ellipse cx="4.3" cy="15" rx="4" ry="2.4" stroke="#9e9e9e" stroke-width="1.7" fill="none"/><ellipse cx="14" cy="21.3" rx="2.3" ry="4.2" stroke="#9e9e9e" stroke-width="1.7" fill="none"/><path d="M0.5 23.5 h5 M3 21 v5" stroke="#333" stroke-width="1.2"/></g><g transform="translate(341,25)"><path d="M1 1 h13 l3 3 v17 h-16z" fill="#f9f9f9" stroke="#cfcfcf"/><path d="M9 6 h14 l3 3 v17 h-17z" fill="#fafafa" stroke="#c9c9c9"/><path d="M12 12 h11 M12 15 h11 M12 18 h11" stroke="#d4d4d4"/><path d="M22 26 l4 -4 h-4z" fill="#cfcfcf"/></g><g transform="translate(375,25)"><path d="M1 1 h13 l3 3 v17 h-16z" fill="#f9f9f9" stroke="#cfcfcf"/><path d="M9 6 h14 l3 3 v17 h-17z" fill="#fafafa" stroke="#c9c9c9"/><path d="M12 12 h11 M12 15 h11 M12 18 h11" stroke="#d4d4d4"/><path d="M22 26 l4 -4 h-4z" fill="#cfcfcf"/><path d="M0.5 23 h5 M3 20.5 v5" stroke="#333" stroke-width="1.2"/></g><g transform="translate(408,25)"><rect x="0.8" y="2.8" width="23" height="22.5" rx="2" fill="#a86c2c" stroke="#7c4c18" stroke-width="1.2"/><rect x="3.5" y="6" width="17.5" height="17" fill="#f3f3f3"/><path d="M6 10 h12 M6 13 h12 M6 16 h12 M6 19 h8" stroke="#cfcfcf"/><rect x="6" y="0" width="12" height="5.5" rx="2" fill="#8e8e8e"/><path d="M21 23 l-4 0 l4 -4z" fill="#999"/></g><g transform="translate(443,25)"><rect x="2.5" y="2.5" width="17" height="16.5" rx="1.5" fill="#a86c2c" stroke="#7c4c18"/><rect x="4.5" y="5" width="13" height="12" fill="#f2f2f2"/><rect x="6" y="0.5" width="9" height="4" rx="1.5" fill="#909090"/><line x1="0" y1="24" x2="21" y2="24" stroke="#444"/><circle cx="5" cy="24" r="1.6" fill="#f00"/><circle cx="10.5" cy="24" r="1.6" fill="#f00"/><circle cx="16" cy="24" r="1.6" fill="#f00"/></g><g transform="translate(474,25)"><path d="M3 1 h11 l3 3 v16 h-14z" fill="#f6f6f6" stroke="#d2d2d2"/><path d="M8 5 h13 l3 3 v16 h-16z" fill="#f8f8f8" stroke="#cfcfcf"/><path d="M2 17 C2 24, 8 23, 12 23" stroke="#a6a6a6" stroke-width="3" fill="none"/><path d="M11 19 l5 4 l-5 4z" fill="#a6a6a6"/></g><text x="512.5" y="36" font-size="8.5" font-family="Liberation Sans" fill="#222">in</text><text x="512.5" y="43" font-size="8.5" font-family="Liberation Sans" fill="#222">m</text><text x="512" y="50" font-size="8.5" font-family="Liberation Sans" fill="#222">mm</text><g transform="translate(530,25)"><rect x="0.5" y="2.5" width="7" height="22" rx="1.5" fill="#f4f4f4" stroke="#8a8a8a"/><path d="M1 6 h3 M1 10 h2 M1 14 h3 M1 18 h2" stroke="#9a9a9a" stroke-width="0.8"/></g><rect x="548.5" y="23.5" width="2" height="2" fill="#fff"/><rect x="549" y="24" width="1.6" height="1.6" fill="#9a9a9a"/><rect x="548.5" y="27.5" width="2" height="2" fill="#fff"/><rect x="549" y="28" width="1.6" height="1.6" fill="#9a9a9a"/><rect x="548.5" y="31.5" width="2" height="2" fill="#fff"/><rect x="549" y="32" width="1.6" height="1.6" fill="#9a9a9a"/><rect x="548.5" y="35.5" width="2" height="2" fill="#fff"/><rect x="549" y="36" width="1.6" height="1.6" fill="#9a9a9a"/><rect x="548.5" y="39.5" width="2" height="2" fill="#fff"/><rect x="549" y="40" width="1.6" height="1.6" fill="#9a9a9a"/><rect x="548.5" y="43.5" width="2" height="2" fill="#fff"/><rect x="549" y="44" width="1.6" height="1.6" fill="#9a9a9a"/><rect x="548.5" y="47.5" width="2" height="2" fill="#fff"/><rect x="549" y="48" width="1.6" height="1.6" fill="#9a9a9a"/><rect x="548.5" y="51.5" width="2" height="2" fill="#fff"/><rect x="549" y="52" width="1.6" height="1.6" fill="#9a9a9a"/><g transform="translate(559,25)"><path d="M6 8 Q -1 12 6 17" stroke="#444" stroke-width="1.4" fill="none"/><line x1="6" y1="17" x2="21" y2="17" stroke="#555" stroke-width="1.6"/><circle cx="6" cy="7.5" r="1.9" fill="#f00"/><circle cx="6" cy="17" r="1.9" fill="#f00"/><circle cx="21" cy="17" r="1.9" fill="#f00"/></g><g transform="translate(591,25)"><path d="M1 2 V9 L8 12 V17 L1 25" stroke="#333" stroke-width="1.6" fill="none"/><path d="M16 2 V9 L23 12 V17 L16 25" stroke="#333" stroke-width="1.6" fill="none"/><path d="M4 5 h8" stroke="#2a5ce8" stroke-width="1.2"/><path d="M12 3 l3 2 l-3 2z" fill="#2a5ce8"/></g><g transform="translate(624,25)"><path d="M1 2 V19 l6 -4 V9" stroke="#a8a8a8" stroke-width="1.6" fill="none"/><path d="M16 2 V19 l6 -4 V9" stroke="#a8a8a8" stroke-width="1.6" fill="none"/><path d="M4 5 h8" stroke="#888" stroke-width="1.2"/><path d="M12 3 l3 2 l-3 2z" fill="#888"/></g><g transform="translate(657,25)"><path d="M1 2 V9 L8 12 V17 L1 25" stroke="#b0b0b0" stroke-width="1.6" fill="none"/><path d="M16 2 V9 L23 12 V17 L16 25" stroke="#b0b0b0" stroke-width="1.6" fill="none"/><path d="M4 5 h8" stroke="#888" stroke-width="1.2"/><path d="M12 3 l3 2 l-3 2z" fill="#888"/></g><g transform="translate(697,25)"><path d="M0 5 L9 10 L21 5" stroke="#222" stroke-width="1.3" fill="none"/><circle cx="9" cy="10" r="2.1" fill="#f00"/><path d="M10 11 v9 l2 -2 l2.5 4 l1.5 -1 l-2.5 -4 h3z" fill="#f2f2f2" stroke="#a0a0a0" stroke-width="0.9"/><path d="M2 22 h6 M5 19 v6" stroke="#2a4ae8" stroke-width="1.3"/></g><g transform="translate(730,25)"><path d="M0 4 h9 L16 12" stroke="#222" stroke-width="1.3" fill="none"/><circle cx="16" cy="12" r="2.1" fill="#f00"/><path d="M18 14 v9 l2 -2 l2.5 4 l1.5 -1 l-2.5 -4 h3z" fill="#f2f2f2" stroke="#a0a0a0" stroke-width="0.9"/><path d="M2 22 h6 M5 19 v6" stroke="#2a4ae8" stroke-width="1.3"/></g><g transform="translate(769,25)"><path d="M0 5 L9 10 L21 5" stroke="#222" stroke-width="1.3" fill="none"/><circle cx="9" cy="10" r="2.1" fill="#f00"/><path d="M10 11 v9 l2 -2 l2.5 4 l1.5 -1 l-2.5 -4 h3z" fill="#f2f2f2" stroke="#a0a0a0" stroke-width="0.9"/><path d="M2 21.5 h6" stroke="#2a4ae8" stroke-width="1.3"/></g><g transform="translate(802,25)"><path d="M0 4 h21" stroke="#222" stroke-width="1.2"/><path d="M5 4 V12 H17 V4" stroke="#2a4ae8" stroke-width="1.5" fill="none"/><circle cx="5" cy="4" r="2.1" fill="#f00"/><circle cx="17" cy="4" r="2.1" fill="#f00"/><path d="M3 21.5 h6" stroke="#2a4ae8" stroke-width="1.3"/></g><g transform="translate(839,25)"><path d="M1 12 L11 7 L10 13 L20 11 L23 24" stroke="#222" stroke-width="1.4" fill="none"/><path d="M11 7 L17 4 L20 11" stroke="#f03030" stroke-width="1.2" fill="none"/><path d="M5 5 L11 2" stroke="#2a5ce8" stroke-width="1.3"/><path d="M10 0 l3 1 l-2 2z" fill="#2a5ce8"/><path d="M23 10 V3" stroke="#2a5ce8" stroke-width="1.3"/><path d="M21 4 l2 -3 l2 3z" fill="#2a5ce8"/></g><g transform="translate(874,25)"><path d="M0.5 20 V11 L8 5 H21 V20 Z" stroke="#222" stroke-width="1.5" fill="none"/><path d="M6 17 L16 13" stroke="#2a5ce8" stroke-width="1.2"/><path d="M15 11 l3 1.5 l-2.5 2.5z" fill="#2a5ce8"/><circle cx="0.5" cy="20" r="2" fill="#f00"/><circle cx="21" cy="12" r="2" fill="#f00"/></g><g transform="translate(906,25)"><path d="M0 5 h3 M20 5 h3" stroke="#222"/><path d="M2 5 Q11.5 15 21 5" stroke="#222" stroke-width="1.3" fill="none"/><circle cx="2" cy="5" r="2" fill="#f00"/><circle cx="21" cy="5" r="2" fill="#f00"/><path d="M11 11 v9 l2 -2 l2.5 4 l1.5 -1 l-2.5 -4 h3z" fill="#f2f2f2" stroke="#a0a0a0" stroke-width="0.9"/></g><g transform="translate(938,25)"><path d="M1.5 1 C 8 5, 8 17, 1.5 25" stroke="#555" stroke-width="1.3" fill="none"/><path d="M17 1 L23 13 L17 25" stroke="#555" stroke-width="1.3" fill="none"/><path d="M9 13 h6" stroke="#888"/><path d="M13.5 11 l2 2 l-2 2" stroke="#888" fill="none"/></g><g transform="translate(976,25)"><path d="M1 11 L7 1 L13 11 Z" stroke="#f02020" stroke-width="1.4" fill="none"/><path d="M13 4 L21 11" stroke="#2a4ae8" stroke-width="1.4"/><path d="M22 13 l-5 -1 l3 -3z" fill="#2a4ae8"/><path d="M9 15 C 5 19, 7 20, 12 19 C 12 14, 11 13, 9 15" stroke="#222" stroke-width="1.4" fill="none"/><circle cx="18" cy="21.5" r="4.2" stroke="#f02020" stroke-width="1.4" fill="none"/></g><g transform="translate(1019,25)"><path d="M0 1 C 5 5, 5 21, 0 25" stroke="#555" stroke-width="1.3" fill="none"/><path d="M6 13 h6" stroke="#888"/><path d="M10.5 11 l2 2 l-2 2" stroke="#888" fill="none"/><path d="M19 2 V25" stroke="#555" stroke-width="1.4"/></g><g transform="translate(1050,25)"><path d="M0 1 L6 13 L0 25" stroke="#555" stroke-width="1.3" fill="none"/><path d="M7 13 h6" stroke="#888"/><path d="M11.5 11 l2 2 l-2 2" stroke="#888" fill="none"/><path d="M15 1 L21 13 L15 25" stroke="#555" stroke-width="1.3" fill="none"/></g><g transform="translate(1083,25)"><rect x="0.5" y="2.5" width="6" height="21" rx="1" stroke="#aaa" stroke-width="1.2" fill="none"/><rect x="17.5" y="2.5" width="6" height="21" rx="1" stroke="#aaa" stroke-width="1.2" fill="none"/><path d="M7 13 h7" stroke="#999"/><path d="M12.5 11 l2 2 l-2 2" stroke="#999" fill="none"/></g><g transform="translate(1116,25)"><rect x="0.5" y="2.5" width="6" height="21" rx="1" stroke="#aaa" stroke-width="1.2" fill="none"/><rect x="17.5" y="2.5" width="6" height="21" rx="1" stroke="#aaa" stroke-width="1.2" fill="none"/><path d="M7 13 h7" stroke="#999"/><path d="M12.5 11 l2 2 l-2 2" stroke="#999" fill="none"/></g><rect x="1151.5" y="23.5" width="2" height="2" fill="#fff"/><rect x="1152" y="24" width="1.6" height="1.6" fill="#9a9a9a"/><rect x="1151.5" y="27.5" width="2" height="2" fill="#fff"/><rect x="1152" y="28" width="1.6" height="1.6" fill="#9a9a9a"/><rect x="1151.5" y="31.5" width="2" height="2" fill="#fff"/><rect x="1152" y="32" width="1.6" height="1.6" fill="#9a9a9a"/><rect x="1151.5" y="35.5" width="2" height="2" fill="#fff"/><rect x="1152" y="36" width="1.6" height="1.6" fill="#9a9a9a"/><rect x="1151.5" y="39.5" width="2" height="2" fill="#fff"/><rect x="1152" y="40" width="1.6" height="1.6" fill="#9a9a9a"/><rect x="1151.5" y="43.5" width="2" height="2" fill="#fff"/><rect x="1152" y="44" width="1.6" height="1.6" fill="#9a9a9a"/><rect x="1151.5" y="47.5" width="2" height="2" fill="#fff"/><rect x="1152" y="48" width="1.6" height="1.6" fill="#9a9a9a"/><rect x="1151.5" y="51.5" width="2" height="2" fill="#fff"/><rect x="1152" y="52" width="1.6" height="1.6" fill="#9a9a9a"/><g transform="translate(1160,25)"><path d="M1 2 H8 L18 24 L25 5" stroke="#6a9ae0" stroke-width="0.9" fill="none"/><path d="M1 24 C 1 6, 5 0, 10 10 C 14 18, 18 20, 25 5" stroke="#111" stroke-width="1.7" fill="none"/><circle cx="1" cy="2" r="2" fill="#f00"/><circle cx="8" cy="2" r="2" fill="#f00"/><circle cx="25" cy="5" r="2" fill="#f00"/><circle cx="1" cy="24" r="2" fill="#f00"/><circle cx="16" cy="24" r="2" fill="#f00"/></g><path d="M1226 34 l3 3 l-3 3 M1230 34 l3 3 l-3 3" stroke="#333" stroke-width="1.1" fill="none" /><rect x="1240.5" y="23.5" width="2" height="2" fill="#fff"/><rect x="1241" y="24" width="1.6" height="1.6" fill="#9a9a9a"/><rect x="1240.5" y="27.5" width="2" height="2" fill="#fff"/><rect x="1241" y="28" width="1.6" height="1.6" fill="#9a9a9a"/><rect x="1240.5" y="31.5" width="2" height="2" fill="#fff"/><rect x="1241" y="32" width="1.6" height="1.6" fill="#9a9a9a"/><rect x="1240.5" y="35.5" width="2" height="2" fill="#fff"/><rect x="1241" y="36" width="1.6" height="1.6" fill="#9a9a9a"/><rect x="1240.5" y="39.5" width="2" height="2" fill="#fff"/><rect x="1241" y="40" width="1.6" height="1.6" fill="#9a9a9a"/><rect x="1240.5" y="43.5" width="2" height="2" fill="#fff"/><rect x="1241" y="44" width="1.6" height="1.6" fill="#9a9a9a"/><rect x="1240.5" y="47.5" width="2" height="2" fill="#fff"/><rect x="1241" y="48" width="1.6" height="1.6" fill="#9a9a9a"/><rect x="1240.5" y="51.5" width="2" height="2" fill="#fff"/><rect x="1241" y="52" width="1.6" height="1.6" fill="#9a9a9a"/><g transform="translate(1252,25)"><path d="M10 2 L20 7.5 V19 L10 24.5 L0 19 V7.5 Z M0 7.5 L10 13 L20 7.5 M10 13 V24.5" stroke="#666" stroke-width="1.1" fill="none"/><path d="M10 2 V13 M0 19 L10 13 L20 19" stroke="#c0c0c0" stroke-width="0.8" fill="none"/><path d="M10 13 V24.5" stroke="#777" stroke-width="1.8"/></g><rect x="1297.5" y="23.5" width="2" height="2" fill="#fff"/><rect x="1298" y="24" width="1.6" height="1.6" fill="#9a9a9a"/><rect x="1297.5" y="27.5" width="2" height="2" fill="#fff"/><rect x="1298" y="28" width="1.6" height="1.6" fill="#9a9a9a"/><rect x="1297.5" y="31.5" width="2" height="2" fill="#fff"/><rect x="1298" y="32" width="1.6" height="1.6" fill="#9a9a9a"/><rect x="1297.5" y="35.5" width="2" height="2" fill="#fff"/><rect x="1298" y="36" width="1.6" height="1.6" fill="#9a9a9a"/><rect x="1297.5" y="39.5" width="2" height="2" fill="#fff"/><rect x="1298" y="40" width="1.6" height="1.6" fill="#9a9a9a"/><rect x="1297.5" y="43.5" width="2" height="2" fill="#fff"/><rect x="1298" y="44" width="1.6" height="1.6" fill="#9a9a9a"/><rect x="1297.5" y="47.5" width="2" height="2" fill="#fff"/><rect x="1298" y="48" width="1.6" height="1.6" fill="#9a9a9a"/><rect x="1297.5" y="51.5" width="2" height="2" fill="#fff"/><rect x="1298" y="52" width="1.6" height="1.6" fill="#9a9a9a"/><defs><linearGradient id="gb" x1="0" y1="0" x2="0" y2="1"><stop offset="0" stop-color="#8a8a8a"/><stop offset="0.5" stop-color="#c9c9c9"/><stop offset="1" stop-color="#f2f2f2"/></linearGradient></defs><rect x="1303.5" y="22.5" width="32" height="32" stroke="#666" stroke-width="1" fill="url(#gb)" rx="0" /><g transform="translate(1309,28)"><path d="M1.5 1 V20 M7.5 1 V20 M13.5 1 V20 M19.5 1 V20 M0.5 1.5 H20.5 M0.5 7.5 H20.5 M0.5 13.5 H20.5 M0.5 19.5 H20.5" stroke="#8a8a8a" stroke-width="0.7"/></g><path d="M1339 34 l3 3 l-3 3 M1343 34 l3 3 l-3 3" stroke="#333" stroke-width="1.1" fill="none" /><rect x="1354.5" y="23.5" width="2" height="2" fill="#fff"/><rect x="1355" y="24" width="1.6" height="1.6" fill="#9a9a9a"/><rect x="1354.5" y="27.5" width="2" height="2" fill="#fff"/><rect x="1355" y="28" width="1.6" height="1.6" fill="#9a9a9a"/><rect x="1354.5" y="31.5" width="2" height="2" fill="#fff"/><rect x="1355" y="32" width="1.6" height="1.6" fill="#9a9a9a"/><rect x="1354.5" y="35.5" width="2" height="2" fill="#fff"/><rect x="1355" y="36" width="1.6" height="1.6" fill="#9a9a9a"/><rect x="1354.5" y="39.5" width="2" height="2" fill="#fff"/><rect x="1355" y="40" width="1.6" height="1.6" fill="#9a9a9a"/><rect x="1354.5" y="43.5" width="2" height="2" fill="#fff"/><rect x="1355" y="44" width="1.6" height="1.6" fill="#9a9a9a"/><rect x="1354.5" y="47.5" width="2" height="2" fill="#fff"/><rect x="1355" y="48" width="1.6" height="1.6" fill="#9a9a9a"/><rect x="1354.5" y="51.5" width="2" height="2" fill="#fff"/><rect x="1355" y="52" width="1.6" height="1.6" fill="#9a9a9a"/><g transform="translate(1366,25)"><path d="M3 19 L16 4" stroke="#8a1010" stroke-width="6" stroke-linecap="round"/><path d="M3 19 L16 4" stroke="#e82a2a" stroke-width="4" stroke-linecap="round"/><path d="M14 6 l2.5 -3" stroke="#c8c8c8" stroke-width="4"/><path d="M0.5 22 l2 -6 l4 3z" fill="#f5d0a0"/><path d="M0.5 22 l1 -2.5 l1.5 1z" fill="#222"/><line x1="0.5" y1="22.5" x2="20" y2="22.5" stroke="#f03030" stroke-width="1.3"/></g><path d="M1397 34 l3 3 l-3 3 M1401 34 l3 3 l-3 3" stroke="#333" stroke-width="1.1" fill="none" /><rect x="4.5" y="60.5" width="2" height="2" fill="#fff"/><rect x="5" y="61" width="1.6" height="1.6" fill="#9a9a9a"/><rect x="4.5" y="64.5" width="2" height="2" fill="#fff"/><rect x="5" y="65" width="1.6" height="1.6" fill="#9a9a9a"/><rect x="4.5" y="68.5" width="2" height="2" fill="#fff"/><rect x="5" y="69" width="1.6" height="1.6" fill="#9a9a9a"/><rect x="4.5" y="72.5" width="2" height="2" fill="#fff"/><rect x="5" y="73" width="1.6" height="1.6" fill="#9a9a9a"/><rect x="4.5" y="76.5" width="2" height="2" fill="#fff"/><rect x="5" y="77" width="1.6" height="1.6" fill="#9a9a9a"/><rect x="4.5" y="80.5" width="2" height="2" fill="#fff"/><rect x="5" y="81" width="1.6" height="1.6" fill="#9a9a9a"/><rect x="4.5" y="84.5" width="2" height="2" fill="#fff"/><rect x="5" y="85" width="1.6" height="1.6" fill="#9a9a9a"/><rect x="4.5" y="88.5" width="2" height="2" fill="#fff"/><rect x="5" y="89" width="1.6" height="1.6" fill="#9a9a9a"/><g transform="translate(15,62)"><line x1="3" y1="19.5" x2="21" y2="7" stroke="#222" stroke-width="1.3"/><circle cx="3" cy="19.5" r="2.1" fill="#f00"/><circle cx="21" cy="7" r="2.1" fill="#f00"/></g><g transform="translate(50,62)"><line x1="2" y1="19" x2="20" y2="7" stroke="#222" stroke-width="1.3"/><line x1="2" y1="19" x2="21" y2="19" stroke="#4a80e8" stroke-width="1.2"/><path d="M13 11 Q 16 14 15 19" stroke="#f0a060" stroke-width="0.9" fill="none"/><circle cx="2" cy="19" r="2.1" fill="#f00"/></g><g transform="translate(83,62)"><line x1="2" y1="12" x2="20" y2="12" stroke="#222" stroke-width="1.5"/><circle cx="2" cy="12" r="2.1" fill="#f00"/></g><g transform="translate(120,62)"><line x1="5.5" y1="2" x2="5.5" y2="20" stroke="#222" stroke-width="1.4"/><circle cx="5.5" cy="20.5" r="2.1" fill="#f00"/></g><g transform="translate(153,62)"><path d="M0 20 L14 1 M0 20 H22" stroke="#f02020" stroke-width="1.3" fill="none"/><path d="M0 20 L20 8" stroke="#222" stroke-width="1.3"/><path d="M11 5 Q 17 11 17 20" stroke="#3a6ae0" stroke-width="1" fill="none"/><rect x="14" y="5" width="4" height="2.5" fill="#4a78e0"/><rect x="17" y="13" width="4" height="3" fill="#4a78e0"/></g><g transform="translate(192,62)"><line x1="0" y1="9" x2="14" y2="2" stroke="#f02020" stroke-width="1.3"/><line x1="3" y1="21" x2="23" y2="11" stroke="#222" stroke-width="1.3"/><line x1="5" y1="6" x2="8" y2="16" stroke="#4a7ae0" stroke-width="1.1"/></g><g transform="translate(225,62)"><line x1="1" y1="12.5" x2="19" y2="4" stroke="#f02020" stroke-width="1.3"/><line x1="5" y1="21" x2="23" y2="12" stroke="#222" stroke-width="1.3"/><circle cx="11" cy="16.5" r="2.1" fill="#f00"/></g><g transform="translate(265,62)"><circle cx="6" cy="15" r="6" stroke="#f02020" stroke-width="1.2" fill="none"/><line x1="6" y1="9" x2="21" y2="5.5" stroke="#222" stroke-width="1.3"/><circle cx="21" cy="5.5" r="2.1" fill="#f00"/></g><g transform="translate(298,62)"><circle cx="6" cy="15" r="6" stroke="#f02020" stroke-width="1.2" fill="none"/><line x1="6" y1="9" x2="19" y2="6.5" stroke="#222" stroke-width="1.3"/><circle cx="20" cy="9" r="2.7" stroke="#f02020" stroke-width="1.1" fill="none"/></g><g transform="translate(332,62)"><circle cx="6" cy="16" r="6" stroke="#f02020" stroke-width="1.2" fill="none"/><line x1="3" y1="11" x2="17" y2="3" stroke="#222" stroke-width="1.2"/><line x1="14" y1="0" x2="22" y2="12.5" stroke="#f02020" stroke-width="1.2"/></g><g transform="translate(369,62)"><line x1="0" y1="21" x2="23" y2="3" stroke="#222" stroke-width="1.2"/><line x1="14" y1="2" x2="9" y2="22" stroke="#222" stroke-width="1.2"/><path d="M14 3 L17 6" stroke="#f08040" stroke-width="1"/><circle cx="11.5" cy="12" r="2.1" fill="#f00"/></g><g transform="translate(402,62)"><line x1="0" y1="21" x2="23" y2="2" stroke="#222" stroke-width="1.2"/><line x1="6" y1="3" x2="17" y2="14" stroke="#222" stroke-width="1.2"/><circle cx="11.5" cy="11.5" r="2.1" fill="#f00"/></g><rect x="437.5" y="60.5" width="2" height="2" fill="#fff"/><rect x="438" y="61" width="1.6" height="1.6" fill="#9a9a9a"/><rect x="437.5" y="64.5" width="2" height="2" fill="#fff"/><rect x="438" y="65" width="1.6" height="1.6" fill="#9a9a9a"/><rect x="437.5" y="68.5" width="2" height="2" fill="#fff"/><rect x="438" y="69" width="1.6" height="1.6" fill="#9a9a9a"/><rect x="437.5" y="72.5" width="2" height="2" fill="#fff"/><rect x="438" y="73" width="1.6" height="1.6" fill="#9a9a9a"/><rect x="437.5" y="76.5" width="2" height="2" fill="#fff"/><rect x="438" y="77" width="1.6" height="1.6" fill="#9a9a9a"/><rect x="437.5" y="80.5" width="2" height="2" fill="#fff"/><rect x="438" y="81" width="1.6" height="1.6" fill="#9a9a9a"/><rect x="437.5" y="84.5" width="2" height="2" fill="#fff"/><rect x="438" y="85" width="1.6" height="1.6" fill="#9a9a9a"/><rect x="437.5" y="88.5" width="2" height="2" fill="#fff"/><rect x="438" y="89" width="1.6" height="1.6" fill="#9a9a9a"/><g transform="translate(448,62)"><rect x="0.5" y="4.5" width="20.5" height="14" stroke="#333" stroke-width="1.5" fill="none"/><circle cx="0.8" cy="4.5" r="2.1" fill="#f00"/><circle cx="20.5" cy="18.5" r="2.1" fill="#f00"/></g><g transform="translate(481,62)"><path d="M0.5 4.5 H21 V18.5 H0.5" stroke="#333" stroke-width="1.5" fill="none"/><path d="M0.5 4.5 H21 M0.5 4.5 V18.5" stroke="#f02020" stroke-width="1.5" fill="none"/><circle cx="0.8" cy="4.5" r="2.1" fill="#f00"/></g><g transform="translate(514,62)"><path d="M0 9.5 L14 2.5 L20 12.5 L6 20 Z" stroke="#333" stroke-width="1.2" fill="none"/><circle cx="10" cy="5" r="2.1" fill="#f00"/><circle cx="19" cy="12" r="2.1" fill="#f00"/><circle cx="6" cy="20" r="2.1" fill="#f00"/></g><g transform="translate(554,62)"><path d="M10.5 2 L20.5 9 L17 20.5 H4 L0.5 9 Z" stroke="#333" stroke-width="1.3" fill="none"/><circle cx="10.5" cy="12" r="2.1" fill="#f00"/><circle cx="16.5" cy="20.5" r="2.1" fill="#f00"/></g><g transform="translate(587,62)"><path d="M10.5 2 L20.5 9 L17 20.5 H4 L0.5 9 Z" stroke="#333" stroke-width="1.3" fill="none"/><circle cx="4" cy="20.5" r="2.1" fill="#f00"/><circle cx="17" cy="20.5" r="2.1" fill="#f00"/></g><g transform="translate(620,62)"><path d="M10.5 2 L20.5 9 L17 20.5 H4 L0.5 9 Z" stroke="#333" stroke-width="1.3" fill="none"/><circle cx="10.5" cy="12" r="2.1" fill="#f00"/><circle cx="10.5" cy="20.5" r="2.1" fill="#f00"/></g><g transform="translate(652,62)"><path d="M5 2 H17 L22 11.5 L17 21 H5 L0 11.5 Z" stroke="#333" stroke-width="1.3" fill="none"/><circle cx="11" cy="2" r="2.1" fill="#f00"/><circle cx="11" cy="21" r="2.1" fill="#f00"/></g><g transform="translate(692,62)"><path d="M10 2 L12.5 8.5 L19.5 9 L14 13.5 L16 20.5 L10 16.5 L4 20.5 L6 13.5 L0.5 9 L7.5 8.5 Z" stroke="#333" stroke-width="1.3" fill="none"/><circle cx="10" cy="12" r="2.1" fill="#f00"/><circle cx="17" cy="20.5" r="2.1" fill="#f00"/></g><rect x="725.5" y="60.5" width="2" height="2" fill="#fff"/><rect x="726" y="61" width="1.6" height="1.6" fill="#9a9a9a"/><rect x="725.5" y="64.5" width="2" height="2" fill="#fff"/><rect x="726" y="65" width="1.6" height="1.6" fill="#9a9a9a"/><rect x="725.5" y="68.5" width="2" height="2" fill="#fff"/><rect x="726" y="69" width="1.6" height="1.6" fill="#9a9a9a"/><rect x="725.5" y="72.5" width="2" height="2" fill="#fff"/><rect x="726" y="73" width="1.6" height="1.6" fill="#9a9a9a"/><rect x="725.5" y="76.5" width="2" height="2" fill="#fff"/><rect x="726" y="77" width="1.6" height="1.6" fill="#9a9a9a"/><rect x="725.5" y="80.5" width="2" height="2" fill="#fff"/><rect x="726" y="81" width="1.6" height="1.6" fill="#9a9a9a"/><rect x="725.5" y="84.5" width="2" height="2" fill="#fff"/><rect x="726" y="85" width="1.6" height="1.6" fill="#9a9a9a"/><rect x="725.5" y="88.5" width="2" height="2" fill="#fff"/><rect x="726" y="89" width="1.6" height="1.6" fill="#9a9a9a"/><g transform="translate(735,62)"><path d="M1 11 C 5 5, 12 1, 19 1" stroke="#333" stroke-width="1.3" fill="none"/><path d="M19 0 v4" stroke="#f06060" stroke-width="1"/><path d="M0 10 L4 13" stroke="#f0a070" stroke-width="0.9"/><circle cx="19" cy="21" r="2.1" fill="#f00"/></g><g transform="translate(775,62)"><path d="M1 20 C 2 10, 10 2, 19 1" stroke="#333" stroke-width="1.4" fill="none"/><line x1="6" y1="7" x2="19" y2="20" stroke="#f0c090" stroke-width="1"/><circle cx="1" cy="20" r="2.1" fill="#f00"/><circle cx="19" cy="1.5" r="2.1" fill="#f00"/></g><g transform="translate(807,62)"><path d="M1 20 C 2 10, 10 2, 19 1" stroke="#333" stroke-width="1.4" fill="none"/><path d="M12 20 C 12 16, 15 13, 19 13" stroke="#f04040" stroke-width="1" fill="none"/><path d="M1 20 H19 V1" stroke="#ccd4e0" stroke-width="0.8" fill="none"/><circle cx="1" cy="20" r="2.1" fill="#f00"/><circle cx="19" cy="1.5" r="2.1" fill="#f00"/></g><g transform="translate(841,62)"><path d="M1 21 C 1 10, 10 2, 19 2" stroke="#333" stroke-width="1.4" fill="none"/><path d="M5 21 C 5 13, 12 5, 19 5" stroke="#f0a090" stroke-width="1" fill="none"/><circle cx="1" cy="21" r="2.1" fill="#f00"/><circle cx="19" cy="2.5" r="2.1" fill="#f00"/></g><g transform="translate(872,62)"><path d="M1.5 18 C 1 -3, 22.5 -3, 22 18" stroke="#333" stroke-width="1.4" fill="none"/><line x1="12" y1="2" x2="12" y2="17" stroke="#f0b070" stroke-width="1.2"/><path d="M4 18 H19" stroke="#d0d8e0" stroke-width="0.8" stroke-dasharray="2 2"/><circle cx="1.5" cy="18" r="2.1" fill="#f00"/><circle cx="22" cy="18" r="2.1" fill="#f00"/></g><g transform="translate(913,62)"><path d="M2 21 C -1 10, 5 2, 10 2 C 14 1, 18 3, 21 4" stroke="#333" stroke-width="1.4" fill="none"/><circle cx="2" cy="21" r="2.1" fill="#f00"/><circle cx="7.5" cy="3" r="2.1" fill="#f00"/><circle cx="20.5" cy="4.5" r="2.1" fill="#f00"/></g><g transform="translate(951,62)"><path d="M1 17 C 5 6, 17 3, 23 9" stroke="#333" stroke-width="1.3" fill="none"/><path d="M7 17 C 9 10, 16 9, 19 12" stroke="#f02020" stroke-width="1.3" fill="none"/><line x1="6" y1="8" x2="10" y2="12" stroke="#4a7ae0" stroke-width="1"/></g><g transform="translate(984,62)"><path d="M1 17 C 5 6, 17 3, 23 9" stroke="#333" stroke-width="1.3" fill="none"/><path d="M7 17 C 9 10, 16 9, 19 12" stroke="#f02020" stroke-width="1.3" fill="none"/><circle cx="5" cy="9" r="2.1" fill="#f00"/></g><g transform="translate(1023,62)"><line x1="1" y1="15" x2="12" y2="10" stroke="#f02020" stroke-width="1.3"/><path d="M11 10 C 16 7, 21 9, 21 16" stroke="#333" stroke-width="1.3" fill="none"/><line x1="14" y1="13" x2="21" y2="16" stroke="#f0b090" stroke-width="0.9"/><circle cx="21" cy="16" r="2.1" fill="#f00"/></g><g transform="translate(1057,62)"><line x1="1.5" y1="0" x2="1.5" y2="25" stroke="#f05050" stroke-width="1.8"/><path d="M1 19 C 2 9, 10 2, 19 1.5" stroke="#333" stroke-width="1.3" fill="none"/><line x1="6" y1="6" x2="19" y2="19" stroke="#f05050" stroke-width="0.9"/><circle cx="19" cy="1.5" r="2.1" fill="#f00"/></g><rect x="1091.5" y="60.5" width="2" height="2" fill="#fff"/><rect x="1092" y="61" width="1.6" height="1.6" fill="#9a9a9a"/><rect x="1091.5" y="64.5" width="2" height="2" fill="#fff"/><rect x="1092" y="65" width="1.6" height="1.6" fill="#9a9a9a"/><rect x="1091.5" y="68.5" width="2" height="2" fill="#fff"/><rect x="1092" y="69" width="1.6" height="1.6" fill="#9a9a9a"/><rect x="1091.5" y="72.5" width="2" height="2" fill="#fff"/><rect x="1092" y="73" width="1.6" height="1.6" fill="#9a9a9a"/><rect x="1091.5" y="76.5" width="2" height="2" fill="#fff"/><rect x="1092" y="77" width="1.6" height="1.6" fill="#9a9a9a"/><rect x="1091.5" y="80.5" width="2" height="2" fill="#fff"/><rect x="1092" y="81" width="1.6" height="1.6" fill="#9a9a9a"/><rect x="1091.5" y="84.5" width="2" height="2" fill="#fff"/><rect x="1092" y="85" width="1.6" height="1.6" fill="#9a9a9a"/><rect x="1091.5" y="88.5" width="2" height="2" fill="#fff"/><rect x="1092" y="89" width="1.6" height="1.6" fill="#9a9a9a"/><g transform="translate(1102,63.3)"><circle cx="10.5" cy="12" r="9.5" stroke="#333" stroke-width="1.3" fill="none"/><circle cx="10.5" cy="12" r="2.1" fill="#f00"/><circle cx="16" cy="3.5" r="2.1" fill="#f00"/></g><rect x="1141.5" y="65.5" width="20" height="20" fill="#dde0ea" stroke="#c8ccdc" rx="1"/><g transform="translate(1141,63.3)"><circle cx="10.5" cy="12" r="9.5" stroke="#333" stroke-width="1.3" fill="none"/><line x1="10.5" y1="12" x2="17" y2="4" stroke="#f0a070" stroke-width="0.9"/><circle cx="10.5" cy="12" r="2.1" fill="#f00"/></g><rect x="1174.5" y="65.5" width="20" height="20" fill="#dde0ea" stroke="#c8ccdc" rx="1"/><g transform="translate(1174,63.3)"><circle cx="10.5" cy="12" r="9.5" stroke="#333" stroke-width="1.3" fill="none"/><line x1="4" y1="19" x2="17" y2="4" stroke="#f0a070" stroke-width="0.9"/><circle cx="10.5" cy="12" r="2.1" fill="#f00"/></g><g transform="translate(1214,63.3)"><circle cx="10" cy="12" r="9.5" stroke="#333" stroke-width="1.3" fill="none"/><line x1="10" y1="12" x2="15" y2="6" stroke="#f0a070" stroke-width="0.9"/><circle cx="1.5" cy="16" r="2.1" fill="#f00"/><circle cx="14.5" cy="20.5" r="2.1" fill="#f00"/></g><path d="M1283 71 l3 3 l-3 3 M1287 71 l3 3 l-3 3" stroke="#333" stroke-width="1.1" fill="none" /><rect x="1297.5" y="60.5" width="2" height="2" fill="#fff"/><rect x="1298" y="61" width="1.6" height="1.6" fill="#9a9a9a"/><rect x="1297.5" y="64.5" width="2" height="2" fill="#fff"/><rect x="1298" y="65" width="1.6" height="1.6" fill="#9a9a9a"/><rect x="1297.5" y="68.5" width="2" height="2" fill="#fff"/><rect x="1298" y="69" width="1.6" height="1.6" fill="#9a9a9a"/><rect x="1297.5" y="72.5" width="2" height="2" fill="#fff"/><rect x="1298" y="73" width="1.6" height="1.6" fill="#9a9a9a"/><rect x="1297.5" y="76.5" width="2" height="2" fill="#fff"/><rect x="1298" y="77" width="1.6" height="1.6" fill="#9a9a9a"/><rect x="1297.5" y="80.5" width="2" height="2" fill="#fff"/><rect x="1298" y="81" width="1.6" height="1.6" fill="#9a9a9a"/><rect x="1297.5" y="84.5" width="2" height="2" fill="#fff"/><rect x="1298" y="85" width="1.6" height="1.6" fill="#9a9a9a"/><rect x="1297.5" y="88.5" width="2" height="2" fill="#fff"/><rect x="1298" y="89" width="1.6" height="1.6" fill="#9a9a9a"/><g transform="translate(1307,62)"><ellipse cx="11.5" cy="12" rx="5.5" ry="12.5" transform="rotate(50 11.5 12)" stroke="#222" stroke-width="1.3" fill="none"/><circle cx="6.5" cy="8.5" r="2.1" fill="#f00"/><circle cx="11" cy="11" r="2.1" fill="#f00"/><circle cx="21" cy="1.5" r="2.1" fill="#f00"/></g><path d="M1339 71 l3 3 l-3 3 M1343 71 l3 3 l-3 3" stroke="#333" stroke-width="1.1" fill="none" /><rect x="1354.5" y="60.5" width="2" height="2" fill="#fff"/><rect x="1355" y="61" width="1.6" height="1.6" fill="#9a9a9a"/><rect x="1354.5" y="64.5" width="2" height="2" fill="#fff"/><rect x="1355" y="65" width="1.6" height="1.6" fill="#9a9a9a"/><rect x="1354.5" y="68.5" width="2" height="2" fill="#fff"/><rect x="1355" y="69" width="1.6" height="1.6" fill="#9a9a9a"/><rect x="1354.5" y="72.5" width="2" height="2" fill="#fff"/><rect x="1355" y="73" width="1.6" height="1.6" fill="#9a9a9a"/><rect x="1354.5" y="76.5" width="2" height="2" fill="#fff"/><rect x="1355" y="77" width="1.6" height="1.6" fill="#9a9a9a"/><rect x="1354.5" y="80.5" width="2" height="2" fill="#fff"/><rect x="1355" y="81" width="1.6" height="1.6" fill="#9a9a9a"/><rect x="1354.5" y="84.5" width="2" height="2" fill="#fff"/><rect x="1355" y="85" width="1.6" height="1.6" fill="#9a9a9a"/><rect x="1354.5" y="88.5" width="2" height="2" fill="#fff"/><rect x="1355" y="89" width="1.6" height="1.6" fill="#9a9a9a"/><g transform="translate(1363,62)"><rect x="8.5" y="10.5" width="14.5" height="10" rx="1" fill="#faf5d8" stroke="#333" stroke-width="1.2"/><circle cx="19.7" cy="20" r="5.5" fill="#f7f0c8" stroke="#333" stroke-width="1.2"/><path d="M14.5 0.5 L10.5 7" stroke="#9a6020" stroke-width="2.6" stroke-linecap="round"/><path d="M10 6 L0.5 15 L7 20 L15.5 10 Z" fill="#f4c238" stroke="#c89a20" stroke-width="0.8"/><path d="M9.5 7.5 l5 3" stroke="#c02020" stroke-width="1.8"/></g><rect x="4.5" y="97.5" width="2" height="2" fill="#fff"/><rect x="5" y="98" width="1.6" height="1.6" fill="#9a9a9a"/><rect x="4.5" y="101.5" width="2" height="2" fill="#fff"/><rect x="5" y="102" width="1.6" height="1.6" fill="#9a9a9a"/><rect x="4.5" y="105.5" width="2" height="2" fill="#fff"/><rect x="5" y="106" width="1.6" height="1.6" fill="#9a9a9a"/><rect x="4.5" y="109.5" width="2" height="2" fill="#fff"/><rect x="5" y="110" width="1.6" height="1.6" fill="#9a9a9a"/><rect x="4.5" y="113.5" width="2" height="2" fill="#fff"/><rect x="5" y="114" width="1.6" height="1.6" fill="#9a9a9a"/><rect x="4.5" y="117.5" width="2" height="2" fill="#fff"/><rect x="5" y="118" width="1.6" height="1.6" fill="#9a9a9a"/><rect x="4.5" y="121.5" width="2" height="2" fill="#fff"/><rect x="5" y="122" width="1.6" height="1.6" fill="#9a9a9a"/><rect x="4.5" y="125.5" width="2" height="2" fill="#fff"/><rect x="5" y="126" width="1.6" height="1.6" fill="#9a9a9a"/><g transform="translate(15,99)"><path d="M1 1 V22 H8 Z" stroke="#8a8a8a" stroke-width="1.6" fill="none"/><path d="M15 1 V22 H24 Z" stroke="#b0b0b0" stroke-width="1.6" fill="none"/><path d="M5 12 h8" stroke="#9a9a9a" stroke-width="3"/><path d="M5 12 h8" stroke="#fff" stroke-width="1.4"/><path d="M12 9 l3.5 3 l-3.5 3z" fill="#eee" stroke="#9a9a9a"/></g><g transform="translate(48,99)"><path d="M1 7 L1 22 L8 22 Z" stroke="#8a8a8a" stroke-width="1.3" fill="none"/><path d="M10 9 L21 1 V9 Z" stroke="#b0b0b0" stroke-width="1.3" fill="none"/><path d="M10 21 C 15 19, 17 15, 17 11" stroke="#aaa" stroke-width="2.6" fill="none"/><path d="M14 12 l3 -4 l3 4z" fill="#fff" stroke="#999"/></g><g transform="translate(81,99)"><path d="M1 1 V22 H8 Z" stroke="#8a8a8a" stroke-width="1.6" fill="none"/><path d="M18 7 V20 H23 Z" stroke="#b0b0b0" stroke-width="1.4" fill="none"/><path d="M6 13 h9" stroke="#9a9a9a" stroke-width="3"/><path d="M6 13 h9" stroke="#fff" stroke-width="1.4"/><path d="M14 10 l3.5 3 l-3.5 3z" fill="#eee" stroke="#9a9a9a"/></g><g transform="translate(113,99)"><path d="M1 10 L20 1 L6 15 Z" stroke="#777" stroke-width="1.3" fill="none"/><path d="M10 17 L25 5 L17 24 Z" stroke="#aaa" stroke-width="1.1" fill="none"/><path d="M12 12 L22 4" stroke="#ccc" stroke-dasharray="2 2"/></g><g transform="translate(148,99)"><path d="M8 1 V22 H1 Z" stroke="#777" stroke-width="1.5" fill="none"/><path d="M15 1 V22 H22 Z" stroke="#aaa" stroke-width="1.3" fill="none"/><path d="M11.5 0 V24" stroke="#bbb" stroke-dasharray="3 2"/></g><g transform="translate(182,99)"><path d="M1 1 L22 8 H1 Z" stroke="#777" stroke-width="1.5" fill="none"/><path d="M1 15 L22 15 L1 22 Z" stroke="#aaa" stroke-width="1.3" fill="none"/><path d="M3 12 h4 M10 12 h4 M17 12 h4" stroke="#ccc" stroke-width="1.5"/></g><g transform="translate(213,99)"><path d="M2 2 h6" stroke="#aaa" stroke-width="2.5"/><path d="M7 0 l4 2 l-4 2z" fill="#aaa"/><circle cx="20" cy="3" r="3.5" stroke="#bbb" stroke-width="1.6" fill="none"/><path d="M1.5 7 L1.5 22 L8 22 Z" stroke="#999" stroke-width="1.3" fill="none"/><path d="M12 21 L23 14 V21 Z" stroke="#aaa" stroke-width="1.3" fill="none"/></g><g transform="translate(246,99)"><path d="M1 7 L1 22 L8 22 Z" stroke="#999" stroke-width="1.3" fill="none"/><path d="M15 1 L22 12 H15 Z" stroke="#aaa" stroke-width="1.3" fill="none"/><path d="M10 21 C 15 20, 18 17, 18 13" stroke="#bbb" stroke-width="2.4" fill="none"/></g><g transform="translate(281,99)"><path d="M1 1 H12 L1 13 Z M12 1 L21 16 V24 M12 11 L3 18 M12 11 L21 16 M7 24 V17 H21" stroke="#8a8a8a" stroke-width="1.3" fill="none"/></g><g transform="translate(312,99)"><line x1="1" y1="1" x2="1" y2="24" stroke="#999" stroke-width="1.6"/><rect x="3.5" y="2.5" width="10" height="5" stroke="#888" stroke-width="1.2" fill="#eee"/><rect x="3.5" y="10.5" width="20" height="5" stroke="#888" stroke-width="1.2" fill="#eee"/><rect x="3.5" y="18.5" width="16" height="5" stroke="#888" stroke-width="1.2" fill="#eee"/></g><g transform="translate(351,99)"><line x1="0" y1="13" x2="19" y2="4" stroke="#f02020" stroke-width="1.3"/><line x1="5" y1="22" x2="24" y2="13" stroke="#222" stroke-width="1.3"/><line x1="7" y1="9" x2="10" y2="18" stroke="#4a7ae0" stroke-width="1.1"/></g><g transform="translate(384,99)"><line x1="1" y1="14" x2="23" y2="3" stroke="#f02020" stroke-width="1.3"/><line x1="6" y1="22" x2="23" y2="13" stroke="#222" stroke-width="1.3"/><circle cx="12" cy="16.5" r="2.1" fill="#f00"/></g><g transform="translate(422,99)"><line x1="1" y1="1" x2="25" y2="13" stroke="#222" stroke-width="1.2"/><line x1="1" y1="24" x2="12" y2="6" stroke="#222" stroke-width="1.2"/><line x1="7" y1="15" x2="12" y2="6.5" stroke="#f02020" stroke-width="1.3"/><path d="M10.40 22.77 L14.25 15.72 L16.01 16.67 L15.00 11.00 L9.68 13.23 L11.44 14.18 L7.60 21.23 Z" fill="#d6e4ff" stroke="#4a7ae0" stroke-width="1"/></g><g transform="translate(457,99)"><path d="M1 1 L23 9 L1 24" stroke="#222" stroke-width="1.2" fill="none"/><path d="M11 5 L23 9 L12 17" stroke="#f02020" stroke-width="1.3" fill="none"/><path d="M8.28 2.93 L13.26 5.42 L12.37 7.21 L18.00 6.00 L15.59 0.77 L14.69 2.56 L9.72 0.07 Z" fill="#d6e4ff" stroke="#4a7ae0" stroke-width="1"/><path d="M9.89 22.33 L15.14 18.83 L16.25 20.49 L18.00 15.00 L12.26 14.50 L13.37 16.16 L8.11 19.67 Z" fill="#d6e4ff" stroke="#4a7ae0" stroke-width="1"/></g><g transform="translate(491,99)"><line x1="1" y1="24" x2="15" y2="1" stroke="#222" stroke-width="1.2"/><line x1="1" y1="24" x2="8" y2="12" stroke="#f02020" stroke-width="1.3"/><path d="M10.33 20.89 L13.84 15.63 L15.50 16.74 L15.00 11.00 L9.51 12.75 L11.17 13.86 L7.67 19.11 Z" fill="#d6e4ff" stroke="#4a7ae0" stroke-width="1"/><path d="M15.5 17.5 l4 4 M19.5 17.5 l-4 4" stroke="#222" stroke-width="1.1"/></g><g transform="translate(522,99)"><path d="M12 2 H6 C 1 2, 1 5, 1 12 C 1 20, 2 23, 8 23 H12 V16 H6 V9 H12 Z" stroke="#333" stroke-width="1.4" fill="#f4f4f4"/><path d="M12 2 H18 V9 H12 M12 9 H18 V23 H12" stroke="#f03030" stroke-width="1.4" fill="none"/><path d="M7.00 19.60 L14.50 19.60 L14.50 21.60 L19.00 18.00 L14.50 14.40 L14.50 16.40 L7.00 16.40 Z" fill="#d6e4ff" stroke="#4a7ae0" stroke-width="1"/></g><g transform="translate(553,99)"><path d="M4 16 L24 4 M4 6 L24 22" stroke="#d8d8d8" stroke-width="0.8"/><path d="M6 20 V8 H19 V20 M6 14 C 10 12, 13 14, 13 20" stroke="#a6a6a6" stroke-width="1.4" fill="none"/></g><g transform="translate(595,99)"><path d="M0 2 H5 L15 13 V24" stroke="#222" stroke-width="1.4" fill="none"/><path d="M5 2 L15 13" stroke="#f02020" stroke-width="1.3"/></g><g transform="translate(628,99)"><path d="M0 2 H9 C 14 2, 19 7, 19 12 V24" stroke="#222" stroke-width="1.4" fill="none"/><path d="M9 2 C 14 2, 19 7, 19 12" stroke="#f02020" stroke-width="1.3" fill="none"/><circle cx="9.5" cy="12" r="0.9" fill="#2a4ae8"/></g><g transform="translate(664,99)"><line x1="0" y1="23" x2="16" y2="1" stroke="#333" stroke-width="1.2"/><path d="M8 3 L12 14 M4 11 H14 L19 13" stroke="#b0b0b0" stroke-width="2.2" fill="none"/><ellipse cx="21" cy="12" rx="4.3" ry="2.6" stroke="#e02020" stroke-width="1.8" fill="none"/><ellipse cx="14.5" cy="20.5" rx="2.4" ry="4" stroke="#e02020" stroke-width="1.8" fill="none"/><circle cx="9" cy="8" r="2.1" fill="#f00"/></g><g transform="translate(697,99)"><line x1="0" y1="23" x2="16" y2="1" stroke="#888" stroke-width="1.2"/><path d="M8 3 L12 14 M4 11 H14 L19 13" stroke="#b0b0b0" stroke-width="2.2" fill="none"/><ellipse cx="21" cy="12" rx="4.3" ry="2.6" stroke="#a8a8a8" stroke-width="1.8" fill="none"/><ellipse cx="14.5" cy="20.5" rx="2.4" ry="4" stroke="#a8a8a8" stroke-width="1.8" fill="none"/></g><g transform="translate(731,99)"><line x1="6.5" y1="2" x2="6.5" y2="23" stroke="#222" stroke-width="1.4"/><line x1="18" y1="2" x2="18" y2="23" stroke="#222" stroke-width="1.4"/><line x1="0" y1="12.5" x2="25" y2="12.5" stroke="#222" stroke-width="1.4"/><circle cx="6.5" cy="12.5" r="2.1" fill="#f00"/><circle cx="18" cy="12.5" r="2.1" fill="#f00"/></g><g transform="translate(768,99)"><line x1="1" y1="2" x2="1" y2="23" stroke="#222" stroke-width="1.3"/><line x1="12" y1="2" x2="12" y2="23" stroke="#222" stroke-width="1.4"/><path d="M12 9 H19 M12 16 H19" stroke="#222" stroke-width="1.4"/><path d="M2 9 H11 M2 16 H11" stroke="#ccc" stroke-dasharray="1 2"/><circle cx="12" cy="9" r="2.1" fill="#f00"/><circle cx="12" cy="16" r="2.1" fill="#f00"/></g><g transform="translate(800,99)"><line x1="4.5" y1="2" x2="4.5" y2="23" stroke="#333" stroke-width="1.4"/><line x1="15.5" y1="2" x2="15.5" y2="23" stroke="#333" stroke-width="1.4"/><line x1="4.5" y1="12.5" x2="15.5" y2="12.5" stroke="#111" stroke-width="1.6"/><path d="M-2 12.5 l2 -1.5 v3z M22 12.5 l-2 -1.5 v3z" fill="#6a9ae8"/><circle cx="4.5" cy="12.5" r="2.1" fill="#f00"/><circle cx="15.5" cy="12.5" r="2.1" fill="#f00"/></g><g transform="translate(831,99)"><line x1="1" y1="24" x2="23" y2="1" stroke="#222" stroke-width="1.3"/><circle cx="11.5" cy="13" r="2.1" fill="#f00"/></g><g transform="translate(871,99)"><path d="M3 18 C 3 10, 14 1, 20 10" stroke="#444" stroke-width="1.3" fill="none"/><path d="M17 6 l4 5 l2 -5z" fill="#555"/><path d="M0 15 l3 5 l3 -4z" fill="#555"/><line x1="4" y1="21" x2="21" y2="12" stroke="#333" stroke-width="1.3"/></g><g transform="translate(908,99)"><circle cx="4.5" cy="8" r="3.5" stroke="#c0c0c0" stroke-width="1.8" stroke-dasharray="1 1" fill="none"/><path d="M8 8 C 10 2, 13 1, 14 4" stroke="#888" stroke-width="1.2" fill="none"/><path d="M15 4 L23 20" stroke="#666" stroke-width="6" stroke-linecap="round"/><path d="M15 4 L23 20" stroke="#888" stroke-width="3" stroke-linecap="round"/></g><g transform="translate(948,99)"><rect x="15" y="2" width="9" height="7" rx="1.2" fill="#9a9a9a" stroke="#777"/><rect x="0.5" y="15" width="8.5" height="7.5" rx="1.2" fill="#9a9a9a" stroke="#777"/><rect x="5" y="8" width="14.5" height="10" fill="#f7f7f7" stroke="#777" stroke-width="1.2"/></g><g transform="translate(981,99)"><rect x="15" y="2" width="9" height="7" rx="1.2" fill="#9a9a9a" stroke="#777"/><rect x="0.5" y="15" width="8.5" height="7.5" rx="1.2" fill="#9a9a9a" stroke="#777"/><rect x="5" y="8" width="14.5" height="10" fill="#f7f7f7" stroke="#777" stroke-width="1.2"/></g><g transform="translate(1019,99)"><circle cx="5.5" cy="3" r="2.8" fill="#fff" stroke="#777" stroke-width="1"/><path d="M0.5 7 h10 v9 h-2 v9 h-2.5 v-6 h-1 v6 h-2.5 v-9 h-2 z" fill="#f6f6f6" stroke="#888" stroke-width="1"/><path d="M1.0 8 v8 M10.0 8 v8" stroke="#999" stroke-width="1.6"/><circle cx="19.5" cy="3" r="2.8" fill="#fff" stroke="#777" stroke-width="1"/><path d="M14.5 7 h10 v9 h-2 v9 h-2.5 v-6 h-1 v6 h-2.5 v-9 h-2 z" fill="#f6f6f6" stroke="#888" stroke-width="1"/><path d="M15.0 8 v8 M24.0 8 v8" stroke="#999" stroke-width="1.6"/></g><text x="1055" y="110" font-size="10" font-family="Liberation Sans" fill="#222">0.00</text><g transform="translate(1052,99)"><path d="M1 15 l4 3 l-4 3 M25 15 l-4 3 l4 3" stroke="#4a7ae0" stroke-width="0.9" fill="none"/><line x1="7" y1="18" x2="19" y2="18" stroke="#555" stroke-width="1.4"/></g><g transform="translate(1094,99)"><rect x="1" y="1" width="17" height="6" rx="2" fill="#c8c8c8" stroke="#888" stroke-width="1.1"/><path d="M18 4 h2 v6 h-10 v4" stroke="#888" stroke-width="1.3" fill="none"/><rect x="7.5" y="14" width="5.5" height="11" rx="2.6" fill="#888"/></g><rect x="1127.5" y="97.5" width="2" height="2" fill="#fff"/><rect x="1128" y="98" width="1.6" height="1.6" fill="#9a9a9a"/><rect x="1127.5" y="101.5" width="2" height="2" fill="#fff"/><rect x="1128" y="102" width="1.6" height="1.6" fill="#9a9a9a"/><rect x="1127.5" y="105.5" width="2" height="2" fill="#fff"/><rect x="1128" y="106" width="1.6" height="1.6" fill="#9a9a9a"/><rect x="1127.5" y="109.5" width="2" height="2" fill="#fff"/><rect x="1128" y="110" width="1.6" height="1.6" fill="#9a9a9a"/><rect x="1127.5" y="113.5" width="2" height="2" fill="#fff"/><rect x="1128" y="114" width="1.6" height="1.6" fill="#9a9a9a"/><rect x="1127.5" y="117.5" width="2" height="2" fill="#fff"/><rect x="1128" y="118" width="1.6" height="1.6" fill="#9a9a9a"/><rect x="1127.5" y="121.5" width="2" height="2" fill="#fff"/><rect x="1128" y="122" width="1.6" height="1.6" fill="#9a9a9a"/><rect x="1127.5" y="125.5" width="2" height="2" fill="#fff"/><rect x="1128" y="126" width="1.6" height="1.6" fill="#9a9a9a"/><text x="1138.5" y="122" font-size="28.5" style="font-family:'Liberation Serif'" fill="#111">A</text><g transform="translate(1170,99)"><rect x="1" y="3" width="23" height="17.5" rx="1" fill="#fff" stroke="#222" stroke-width="1.6"/><path d="M4 18 L9 10 L12 14 L15 10 L21 17 V18 Z" fill="#111"/><circle cx="18.5" cy="7" r="1.7" fill="#111"/></g><rect x="1205.5" y="97.5" width="2" height="2" fill="#fff"/><rect x="1206" y="98" width="1.6" height="1.6" fill="#9a9a9a"/><rect x="1205.5" y="101.5" width="2" height="2" fill="#fff"/><rect x="1206" y="102" width="1.6" height="1.6" fill="#9a9a9a"/><rect x="1205.5" y="105.5" width="2" height="2" fill="#fff"/><rect x="1206" y="106" width="1.6" height="1.6" fill="#9a9a9a"/><rect x="1205.5" y="109.5" width="2" height="2" fill="#fff"/><rect x="1206" y="110" width="1.6" height="1.6" fill="#9a9a9a"/><rect x="1205.5" y="113.5" width="2" height="2" fill="#fff"/><rect x="1206" y="114" width="1.6" height="1.6" fill="#9a9a9a"/><rect x="1205.5" y="117.5" width="2" height="2" fill="#fff"/><rect x="1206" y="118" width="1.6" height="1.6" fill="#9a9a9a"/><rect x="1205.5" y="121.5" width="2" height="2" fill="#fff"/><rect x="1206" y="122" width="1.6" height="1.6" fill="#9a9a9a"/><rect x="1205.5" y="125.5" width="2" height="2" fill="#fff"/><rect x="1206" y="126" width="1.6" height="1.6" fill="#9a9a9a"/><g transform="translate(1213,99)"><circle cx="13.5" cy="12.5" r="10.5" stroke="#222" stroke-width="1.3" fill="none"/><path d="M0 12.5 H27 M13.5 -1 V26" stroke="#f06060" stroke-width="1.3" stroke-dasharray="3 2"/><circle cx="13.5" cy="12.5" r="1.6" fill="#f00"/></g><text x="1247" y="108.5" font-size="11" fill="#111">1</text><text x="1255.5" y="116" font-size="11" fill="#111">2</text><text x="1265" y="123.7" font-size="11" fill="#111">3</text><path d="M1283 108 l3 3 l-3 3 M1287 108 l3 3 l-3 3" stroke="#333" stroke-width="1.1" fill="none" /><rect x="1297.5" y="97.5" width="2" height="2" fill="#fff"/><rect x="1298" y="98" width="1.6" height="1.6" fill="#9a9a9a"/><rect x="1297.5" y="101.5" width="2" height="2" fill="#fff"/><rect x="1298" y="102" width="1.6" height="1.6" fill="#9a9a9a"/><rect x="1297.5" y="105.5" width="2" height="2" fill="#fff"/><rect x="1298" y="106" width="1.6" height="1.6" fill="#9a9a9a"/><rect x="1297.5" y="109.5" width="2" height="2" fill="#fff"/><rect x="1298" y="110" width="1.6" height="1.6" fill="#9a9a9a"/><rect x="1297.5" y="113.5" width="2" height="2" fill="#fff"/><rect x="1298" y="114" width="1.6" height="1.6" fill="#9a9a9a"/><rect x="1297.5" y="117.5" width="2" height="2" fill="#fff"/><rect x="1298" y="118" width="1.6" height="1.6" fill="#9a9a9a"/><rect x="1297.5" y="121.5" width="2" height="2" fill="#fff"/><rect x="1298" y="122" width="1.6" height="1.6" fill="#9a9a9a"/><rect x="1297.5" y="125.5" width="2" height="2" fill="#fff"/><rect x="1298" y="126" width="1.6" height="1.6" fill="#9a9a9a"/><g transform="translate(1307,99)"><path d="M0.6 12.3 L5.3 19.3 M17.7 3.8 L22.3 11.6" stroke="#111" stroke-width="1.2"/><line x1="3.5" y1="15" x2="19.5" y2="6.5" stroke="#111" stroke-width="1.2"/><path d="M3 15.3 l5 -1 l-1.8 -3z M20 6.2 l-5 1 l1.8 3z" fill="#111"/><line x1="6" y1="22.7" x2="24" y2="13.4" stroke="#f02020" stroke-width="1.2"/></g><path d="M1339 108 l3 3 l-3 3 M1343 108 l3 3 l-3 3" stroke="#333" stroke-width="1.1" fill="none" /><rect x="1354.5" y="97.5" width="2" height="2" fill="#fff"/><rect x="1355" y="98" width="1.6" height="1.6" fill="#9a9a9a"/><rect x="1354.5" y="101.5" width="2" height="2" fill="#fff"/><rect x="1355" y="102" width="1.6" height="1.6" fill="#9a9a9a"/><rect x="1354.5" y="105.5" width="2" height="2" fill="#fff"/><rect x="1355" y="106" width="1.6" height="1.6" fill="#9a9a9a"/><rect x="1354.5" y="109.5" width="2" height="2" fill="#fff"/><rect x="1355" y="110" width="1.6" height="1.6" fill="#9a9a9a"/><rect x="1354.5" y="113.5" width="2" height="2" fill="#fff"/><rect x="1355" y="114" width="1.6" height="1.6" fill="#9a9a9a"/><rect x="1354.5" y="117.5" width="2" height="2" fill="#fff"/><rect x="1355" y="118" width="1.6" height="1.6" fill="#9a9a9a"/><rect x="1354.5" y="121.5" width="2" height="2" fill="#fff"/><rect x="1355" y="122" width="1.6" height="1.6" fill="#9a9a9a"/><rect x="1354.5" y="125.5" width="2" height="2" fill="#fff"/><rect x="1355" y="126" width="1.6" height="1.6" fill="#9a9a9a"/><g transform="translate(1365,99)"><path d="M1 24 V10 L5 5 H21 V24 Z" fill="#eee" stroke="#b0b0b0" stroke-width="1.2"/><path d="M1 18 L13 6 M1 24 L19 6 M7 24 L21 10 M13 24 L21 16" stroke="#b8b8b8" stroke-width="0.9"/><circle cx="12.5" cy="14" r="3.2" fill="#eee" stroke="#b0b0b0"/></g><path d="M1397 108 l3 3 l-3 3 M1401 108 l3 3 l-3 3" stroke="#333" stroke-width="1.1" fill="none" /><rect x="4.5" y="134.5" width="2" height="2" fill="#fff"/><rect x="5" y="135" width="1.6" height="1.6" fill="#9a9a9a"/><rect x="4.5" y="138.5" width="2" height="2" fill="#fff"/><rect x="5" y="139" width="1.6" height="1.6" fill="#9a9a9a"/><rect x="4.5" y="142.5" width="2" height="2" fill="#fff"/><rect x="5" y="143" width="1.6" height="1.6" fill="#9a9a9a"/><rect x="4.5" y="146.5" width="2" height="2" fill="#fff"/><rect x="5" y="147" width="1.6" height="1.6" fill="#9a9a9a"/><rect x="4.5" y="150.5" width="2" height="2" fill="#fff"/><rect x="5" y="151" width="1.6" height="1.6" fill="#9a9a9a"/><rect x="4.5" y="154.5" width="2" height="2" fill="#fff"/><rect x="5" y="155" width="1.6" height="1.6" fill="#9a9a9a"/><rect x="4.5" y="158.5" width="2" height="2" fill="#fff"/><rect x="5" y="159" width="1.6" height="1.6" fill="#9a9a9a"/><rect x="4.5" y="162.5" width="2" height="2" fill="#fff"/><rect x="5" y="163" width="1.6" height="1.6" fill="#9a9a9a"/><g transform="translate(28,142)"><path d="M1 1 V13 L4 10 L7 16 L9 15 L6.5 9.5 H10.5 Z" fill="#f8f8f8" stroke="#8a8a8a" stroke-width="1"/></g><rect x="5.5" y="171.5" width="2" height="2" fill="#fff"/><rect x="6" y="172" width="1.6" height="1.6" fill="#9a9a9a"/><rect x="9.5" y="171.5" width="2" height="2" fill="#fff"/><rect x="10" y="172" width="1.6" height="1.6" fill="#9a9a9a"/><rect x="13.5" y="171.5" width="2" height="2" fill="#fff"/><rect x="14" y="172" width="1.6" height="1.6" fill="#9a9a9a"/><rect x="17.5" y="171.5" width="2" height="2" fill="#fff"/><rect x="18" y="172" width="1.6" height="1.6" fill="#9a9a9a"/><rect x="21.5" y="171.5" width="2" height="2" fill="#fff"/><rect x="22" y="172" width="1.6" height="1.6" fill="#9a9a9a"/><rect x="25.5" y="171.5" width="2" height="2" fill="#fff"/><rect x="26" y="172" width="1.6" height="1.6" fill="#9a9a9a"/><rect x="29.5" y="171.5" width="2" height="2" fill="#fff"/><rect x="30" y="172" width="1.6" height="1.6" fill="#9a9a9a"/><rect x="33.5" y="171.5" width="2" height="2" fill="#fff"/><rect x="34" y="172" width="1.6" height="1.6" fill="#9a9a9a"/><path d="M13.5 194 H23.5 M18.5 189 V199" stroke="#111" stroke-width="1.1"/><rect x="7.5" y="214.5" width="3.5" height="3.5" fill="#f00"/><rect x="7.5" y="221.5" width="3.5" height="3.5" fill="#f00"/><rect x="7.5" y="228.5" width="3.5" height="3.5" fill="#f00"/><rect x="7.5" y="235.5" width="3.5" height="3.5" fill="#f00"/><rect x="14.5" y="214.5" width="3.5" height="3.5" fill="#f00"/><rect x="14.5" y="221.5" width="3.5" height="3.5" fill="#f00"/><rect x="14.5" y="228.5" width="3.5" height="3.5" fill="#f00"/><rect x="14.5" y="235.5" width="3.5" height="3.5" fill="#f00"/><rect x="21.5" y="214.5" width="3.5" height="3.5" fill="#f00"/><rect x="21.5" y="221.5" width="3.5" height="3.5" fill="#f00"/><rect x="21.5" y="228.5" width="3.5" height="3.5" fill="#f00"/><rect x="21.5" y="235.5" width="3.5" height="3.5" fill="#f00"/><rect x="28.5" y="214.5" width="3.5" height="3.5" fill="#f00"/><rect x="28.5" y="221.5" width="3.5" height="3.5" fill="#f00"/><rect x="28.5" y="228.5" width="3.5" height="3.5" fill="#f00"/><rect x="28.5" y="235.5" width="3.5" height="3.5" fill="#f00"/><g transform="translate(7,253)"><path d="M10 1 C 10 8, 14 12, 22 14" stroke="#222" stroke-width="1.2" fill="none"/><line x1="2" y1="10" x2="22" y2="23" stroke="#222" stroke-width="1.2"/><circle cx="10" cy="1.5" r="2.1" fill="#f00"/><circle cx="22" cy="14" r="2.1" fill="#f00"/><circle cx="2" cy="10" r="2.1" fill="#f00"/><circle cx="22" cy="22.5" r="2.1" fill="#f00"/></g><g transform="translate(7,286)"><path d="M2 12 L22 2" stroke="#222" stroke-width="1.2"/><path d="M9 24 C 10 16, 15 12, 22 12" stroke="#222" stroke-width="1.2" fill="none"/><circle cx="2" cy="12" r="2.1" fill="#f00"/><circle cx="7" cy="9.5" r="2.1" fill="#f00"/><circle cx="12" cy="7" r="2.1" fill="#f00"/><circle cx="17" cy="4.5" r="2.1" fill="#f00"/><circle cx="22" cy="2" r="2.1" fill="#f00"/><circle cx="9" cy="23.5" r="2.1" fill="#f00"/><circle cx="11" cy="18" r="2.1" fill="#f00"/><circle cx="16" cy="13" r="2.1" fill="#f00"/><circle cx="22" cy="12" r="2.1" fill="#f00"/></g><g transform="translate(7,322)"><path d="M2 1 L12 13 L21 10 M12 13 L10 24" stroke="#222" stroke-width="1.2" fill="none"/><path d="M10 9 Q 14 8 15 12" stroke="#666" stroke-width="0.7" fill="none"/><circle cx="12" cy="13" r="2.1" fill="#f00"/></g><g transform="translate(7,355)"><circle cx="15" cy="8" r="6.5" stroke="#222" stroke-width="1.3" fill="none"/><line x1="2" y1="18" x2="10" y2="3" stroke="#222" stroke-width="1.2"/><circle cx="10" cy="3.5" r="2.1" fill="#f00"/></g><g transform="translate(7,387)"><line x1="1" y1="7" x2="23" y2="0" stroke="#222" stroke-width="1.2"/><path d="M9 18 C 9 11, 15 7, 22 7" stroke="#222" stroke-width="1.3" fill="none"/><circle cx="10.5" cy="4.5" r="2.1" fill="#f00"/><circle cx="22" cy="17" r="2.1" fill="#f00"/></g><g transform="translate(7,420)"><circle cx="12" cy="11" r="10" stroke="#222" stroke-width="1.3" fill="none"/><circle cx="12" cy="11" r="2.1" fill="#f00"/><circle cx="12" cy="1" r="2.1" fill="#f00"/><circle cx="12" cy="21" r="2.1" fill="#f00"/><circle cx="2" cy="11" r="2.1" fill="#f00"/><circle cx="22" cy="11" r="2.1" fill="#f00"/></g><g transform="translate(7,459)"><line x1="1" y1="11" x2="23" y2="1" stroke="#222" stroke-width="1.2"/><path d="M9 22 C 9 14, 14 10, 22 9" stroke="#222" stroke-width="1.3" fill="none"/><circle cx="11" cy="6.5" r="2.1" fill="#f00"/><circle cx="14" cy="12" r="2.1" fill="#f00"/></g><rect x="7.5" y="493.5" width="23" height="18.5" fill="none" stroke="#222" stroke-width="1.3"/><path d="M9 510 l5 -4 M20 501 l6 -5" stroke="#333" stroke-width="0.8"/><circle cx="18" cy="503" r="2.1" fill="#f00"/><g transform="translate(7,530)"><line x1="3" y1="9" x2="23" y2="0" stroke="#222" stroke-width="1.2"/><path d="M13 21 C 14 16, 17 14, 23 13" stroke="#222" stroke-width="1.3" fill="none"/><path d="M2 4 l6 -2 l-1 4z M14 19 l4 -4 l0 6z" fill="#222"/><circle cx="10" cy="5.5" r="2.1" fill="#f00"/><circle cx="14" cy="14" r="2.1" fill="#f00"/></g><g transform="translate(7,562)"><path d="M3 9 l4 -2 M3 12 l4 -2 M15 6 l3 -2" stroke="#222" stroke-width="1.6"/><circle cx="10" cy="9.5" r="2.1" fill="#f00"/></g><text x="6" y="586" font-size="12" font-family="Liberation Sans" fill="#222">1</text><text x="25.5" y="575" font-size="12" fill="#222">2</text><g transform="translate(7,604)"><path d="M2 7 L11 11" stroke="#222" stroke-width="1.3"/><path d="M16 1 L13 15" stroke="#222" stroke-width="1.3"/><circle cx="13" cy="15" r="2.1" fill="#f00"/></g><path d="M15.5 705 l3 2.5 l3 -2.5 M15.5 709 l3 2.5 l3 -2.5" stroke="#333" stroke-width="1.2" fill="none"/><g transform="translate(51.5,172.5)"><circle cx="6.3" cy="6.3" r="5.6" fill="#fff" stroke="#203a9a" stroke-width="1.8"/><path d="M1.5 4 A5.6 5.6 0 0 1 8 0.9" stroke="#9aa4c8" stroke-width="1.8" fill="none"/><path d="M3 7 L6 5 M5 3 L6.5 6" stroke="#d8d8e0" stroke-width="0.7"/><path d="M6.5 6.5 L10.5 10.5" stroke="#e8b020" stroke-width="2.2"/><circle cx="11.8" cy="11.8" r="1.2" fill="#f07070"/></g><rect x="914.5" y="173.5" width="13" height="13" rx="2" fill="#e08a4e" stroke="#e83a3a" stroke-width="1.2"/><path d="M917.5 176.5 l7 7 M924.5 176.5 l-7 7" stroke="#fff" stroke-width="2"/><circle cx="490" cy="453.5" r="4.8" fill="none" stroke="#c04530" stroke-width="1.1"/><rect x="1142.5" y="174.5" width="6" height="5" fill="none" stroke="#222" stroke-width="1"/><path d="M1142 174.5 h7" stroke="#222" stroke-width="2"/><rect x="1140.5" y="177.5" width="5.5" height="5" fill="#dcdcdc" stroke="#222" stroke-width="1"/><path d="M1140 178 h6.5" stroke="#222" stroke-width="2"/><path d="M1161.5 175.5 l7.5 7.5 M1169 175.5 l-7.5 7.5" stroke="#333" stroke-width="1.7"/><rect x="1335.5" y="174.5" width="6" height="5" fill="none" stroke="#222" stroke-width="1"/><path d="M1335 174.5 h7" stroke="#222" stroke-width="2"/><rect x="1333.5" y="177.5" width="5.5" height="5" fill="#dcdcdc" stroke="#222" stroke-width="1"/><path d="M1333 178 h6.5" stroke="#222" stroke-width="2"/><path d="M1354.5 175.5 l7.5 7.5 M1362 175.5 l-7.5 7.5" stroke="#333" stroke-width="1.7"/><g transform="translate(961.5,195)"><path d="M-0.5 6.5 C 2 0.5, 13 0, 15.5 5.5 C 13 12, 3 12.5, -0.5 6.5 Z" fill="#111"/><path d="M2 6.5 C 4 3, 11 3, 13 6.5 C 11 9.5, 4 9.8, 2 6.5 Z" fill="#fff"/><circle cx="8" cy="6.3" r="2.6" fill="#111"/><path d="M8 4.5 v2.8" stroke="#fff" stroke-width="0.8"/></g><g transform="translate(1007,195)"><path d="M-0.5 6.5 C 2 0.5, 13 0, 15.5 5.5 C 13 12, 3 12.5, -0.5 6.5 Z" fill="#a8a8a8"/><path d="M2 6.5 C 4 3, 11 3, 13 6.5 C 11 9.5, 4 9.8, 2 6.5 Z" fill="#fff"/><circle cx="8" cy="6.3" r="2.6" fill="#a8a8a8"/><path d="M8 4.5 v2.8" stroke="#fff" stroke-width="0.8"/></g><path d="M1054.5 201.5 h13 M1061 195.5 v12" stroke="#e01818" stroke-width="2.8"/><path d="M1101 201.5 h13" stroke="#e01818" stroke-width="2.8"/><g transform="translate(1147,193)"><path d="M2 14 L13 2" stroke="#8a5a20" stroke-width="4.2" stroke-linecap="round"/><path d="M2 14 L13 2" stroke="#e8a040" stroke-width="2.6" stroke-linecap="round"/><circle cx="13" cy="2" r="1.8" fill="#e03030"/><path d="M0.5 16 l1 -3 l2 2z" fill="#333"/></g><path d="M1163.5 225 l4 -4 l4 4" stroke="#444" stroke-width="1.8" fill="none"/><path d="M1163.5 320 l4 4 l4 -4" stroke="#444" stroke-width="1.8" fill="none"/><rect x="950.5" y="218.5" width="15" height="9" fill="#fff" stroke="#111" stroke-width="1"/><g transform="translate(1054,216.5)"><path d="M2 11 V6 C 2 0.3, 10.5 0.3, 10.5 6 V11" stroke="#0a0a0a" stroke-width="3.8" fill="none"/><rect x="0.3" y="11" width="3.6" height="3" fill="#fff" stroke="#bbb" stroke-width="0.6"/><rect x="8.6" y="11" width="3.6" height="3" fill="#fff" stroke="#bbb" stroke-width="0.6"/></g><g transform="translate(1075,217.5)"><rect x="3" y="0.5" width="8" height="5" fill="#eee" stroke="#bbb"/><rect x="0.5" y="5" width="13" height="6" rx="1.5" fill="#e2e2e2" stroke="#b5b5b5"/><path d="M2 8.5 h10" stroke="#c5c5c5"/></g><g transform="translate(1096.5,217.5)"><path d="M-0.5 6.5 C 2 0.5, 13 0, 15.5 5.5 C 13 12, 3 12.5, -0.5 6.5 Z" fill="#111"/><path d="M2 6.5 C 4 3, 11 3, 13 6.5 C 11 9.5, 4 9.8, 2 6.5 Z" fill="#fff"/><circle cx="8" cy="6.3" r="2.6" fill="#111"/><path d="M8 4.5 v2.8" stroke="#fff" stroke-width="0.8"/></g><g transform="translate(1119,216.5)"><circle cx="7" cy="7" r="4" fill="#f5c020"/><path d="M7 0 v2 M7 12 v2 M0 7 h2 M12 7 h2 M2 2 l1.5 1.5 M10.5 10.5 l1.5 1.5 M12 2 l-1.5 1.5 M2 12 l1.5 -1.5" stroke="#f0c080" stroke-width="1"/></g><g transform="translate(1142.5,216.5)"><path d="M2.5 6 V4 C 2.5 0.5, 8.5 0.5, 8.5 4 V6" stroke="#bdbdbd" stroke-width="1.8" fill="none"/><rect x="0.5" y="6" width="10" height="8" fill="#bdbdbd"/></g><rect x="950.5" y="238.5" width="15" height="9" fill="#000" stroke="#111" stroke-width="1"/><g transform="translate(1054,236.5)"><path d="M2 11 V6 C 2 0.3, 10.5 0.3, 10.5 6 V11" stroke="#0a0a0a" stroke-width="3.8" fill="none"/><rect x="0.3" y="11" width="3.6" height="3" fill="#fff" stroke="#bbb" stroke-width="0.6"/><rect x="8.6" y="11" width="3.6" height="3" fill="#fff" stroke="#bbb" stroke-width="0.6"/></g><g transform="translate(1075,237.5)"><rect x="3" y="0.5" width="8" height="5" fill="#eee" stroke="#bbb"/><rect x="0.5" y="5" width="13" height="6" rx="1.5" fill="#e2e2e2" stroke="#b5b5b5"/><path d="M2 8.5 h10" stroke="#c5c5c5"/></g><g transform="translate(1096.5,237.5)"><path d="M-0.5 6.5 C 2 0.5, 13 0, 15.5 5.5 C 13 12, 3 12.5, -0.5 6.5 Z" fill="#111"/><path d="M2 6.5 C 4 3, 11 3, 13 6.5 C 11 9.5, 4 9.8, 2 6.5 Z" fill="#fff"/><circle cx="8" cy="6.3" r="2.6" fill="#111"/><path d="M8 4.5 v2.8" stroke="#fff" stroke-width="0.8"/></g><g transform="translate(1119,236.5)"><circle cx="7" cy="7" r="4" fill="#f5c020"/><path d="M7 0 v2 M7 12 v2 M0 7 h2 M12 7 h2 M2 2 l1.5 1.5 M10.5 10.5 l1.5 1.5 M12 2 l-1.5 1.5 M2 12 l1.5 -1.5" stroke="#f0c080" stroke-width="1"/></g><g transform="translate(1142.5,236.5)"><path d="M2.5 6 V4 C 2.5 0.5, 8.5 0.5, 8.5 4 V6" stroke="#bdbdbd" stroke-width="1.8" fill="none"/><rect x="0.5" y="6" width="10" height="8" fill="#bdbdbd"/></g><rect x="950.5" y="258.5" width="15" height="9" fill="#000" stroke="#111" stroke-width="1"/><g transform="translate(1054,256.5)"><path d="M2 11 V6 C 2 0.3, 10.5 0.3, 10.5 6 V11" stroke="#0a0a0a" stroke-width="3.8" fill="none"/><rect x="0.3" y="11" width="3.6" height="3" fill="#fff" stroke="#bbb" stroke-width="0.6"/><rect x="8.6" y="11" width="3.6" height="3" fill="#fff" stroke="#bbb" stroke-width="0.6"/></g><g transform="translate(1075,257.5)"><rect x="3" y="0.5" width="8" height="5" fill="#eee" stroke="#bbb"/><rect x="0.5" y="5" width="13" height="6" rx="1.5" fill="#e2e2e2" stroke="#b5b5b5"/><path d="M2 8.5 h10" stroke="#c5c5c5"/></g><g transform="translate(1096.5,257.5)"><path d="M-0.5 6.5 C 2 0.5, 13 0, 15.5 5.5 C 13 12, 3 12.5, -0.5 6.5 Z" fill="#111"/><path d="M2 6.5 C 4 3, 11 3, 13 6.5 C 11 9.5, 4 9.8, 2 6.5 Z" fill="#fff"/><circle cx="8" cy="6.3" r="2.6" fill="#111"/><path d="M8 4.5 v2.8" stroke="#fff" stroke-width="0.8"/></g><g transform="translate(1119,256.5)"><circle cx="7" cy="7" r="4" fill="#f5c020"/><path d="M7 0 v2 M7 12 v2 M0 7 h2 M12 7 h2 M2 2 l1.5 1.5 M10.5 10.5 l1.5 1.5 M12 2 l-1.5 1.5 M2 12 l1.5 -1.5" stroke="#f0c080" stroke-width="1"/></g><g transform="translate(1142.5,256.5)"><path d="M2.5 6 V4 C 2.5 0.5, 8.5 0.5, 8.5 4 V6" stroke="#bdbdbd" stroke-width="1.8" fill="none"/><rect x="0.5" y="6" width="10" height="8" fill="#bdbdbd"/></g><rect x="950.5" y="278.5" width="15" height="9" fill="#0a6a10" stroke="#111" stroke-width="1"/><g transform="translate(1054,276.5)"><path d="M2 11 V6 C 2 0.3, 10.5 0.3, 10.5 6 V11" stroke="#0a0a0a" stroke-width="3.8" fill="none"/><rect x="0.3" y="11" width="3.6" height="3" fill="#fff" stroke="#bbb" stroke-width="0.6"/><rect x="8.6" y="11" width="3.6" height="3" fill="#fff" stroke="#bbb" stroke-width="0.6"/></g><g transform="translate(1075,277.5)"><rect x="3" y="0.5" width="8" height="5" fill="#eee" stroke="#bbb"/><rect x="0.5" y="5" width="13" height="6" rx="1.5" fill="#e2e2e2" stroke="#b5b5b5"/><path d="M2 8.5 h10" stroke="#c5c5c5"/></g><g transform="translate(1096.5,277.5)"><path d="M-0.5 6.5 C 2 0.5, 13 0, 15.5 5.5 C 13 12, 3 12.5, -0.5 6.5 Z" fill="#111"/><path d="M2 6.5 C 4 3, 11 3, 13 6.5 C 11 9.5, 4 9.8, 2 6.5 Z" fill="#fff"/><circle cx="8" cy="6.3" r="2.6" fill="#111"/><path d="M8 4.5 v2.8" stroke="#fff" stroke-width="0.8"/></g><g transform="translate(1119,276.5)"><circle cx="7" cy="7" r="4" fill="#f5c020"/><path d="M7 0 v2 M7 12 v2 M0 7 h2 M12 7 h2 M2 2 l1.5 1.5 M10.5 10.5 l1.5 1.5 M12 2 l-1.5 1.5 M2 12 l1.5 -1.5" stroke="#f0c080" stroke-width="1"/></g><g transform="translate(1142.5,276.5)"><path d="M2.5 6 V4 C 2.5 0.5, 8.5 0.5, 8.5 4 V6" stroke="#bdbdbd" stroke-width="1.8" fill="none"/><rect x="0.5" y="6" width="10" height="8" fill="#bdbdbd"/></g><rect x="950.5" y="298.5" width="15" height="9" fill="#66ccff" stroke="#111" stroke-width="1"/><g transform="translate(1054,296.5)"><path d="M2 11 V6 C 2 0.3, 10.5 0.3, 10.5 6 V11" stroke="#0a0a0a" stroke-width="3.8" fill="none"/><rect x="0.3" y="11" width="3.6" height="3" fill="#fff" stroke="#bbb" stroke-width="0.6"/><rect x="8.6" y="11" width="3.6" height="3" fill="#fff" stroke="#bbb" stroke-width="0.6"/></g><g transform="translate(1075,297.5)"><rect x="3" y="0.5" width="8" height="5" fill="#eee" stroke="#bbb"/><rect x="0.5" y="5" width="13" height="6" rx="1.5" fill="#e2e2e2" stroke="#b5b5b5"/><path d="M2 8.5 h10" stroke="#c5c5c5"/></g><g transform="translate(1096.5,297.5)"><path d="M-0.5 6.5 C 2 0.5, 13 0, 15.5 5.5 C 13 12, 3 12.5, -0.5 6.5 Z" fill="#111"/><path d="M2 6.5 C 4 3, 11 3, 13 6.5 C 11 9.5, 4 9.8, 2 6.5 Z" fill="#fff"/><circle cx="8" cy="6.3" r="2.6" fill="#111"/><path d="M8 4.5 v2.8" stroke="#fff" stroke-width="0.8"/></g><g transform="translate(1119,296.5)"><circle cx="7" cy="7" r="4" fill="#f5c020"/><path d="M7 0 v2 M7 12 v2 M0 7 h2 M12 7 h2 M2 2 l1.5 1.5 M10.5 10.5 l1.5 1.5 M12 2 l-1.5 1.5 M2 12 l1.5 -1.5" stroke="#f0c080" stroke-width="1"/></g><g transform="translate(1142.5,296.5)"><path d="M2.5 6 V4 C 2.5 0.5, 8.5 0.5, 8.5 4 V6" stroke="#bdbdbd" stroke-width="1.8" fill="none"/><rect x="0.5" y="6" width="10" height="8" fill="#bdbdbd"/></g><rect x="950.5" y="318.5" width="15" height="9" fill="#000" stroke="#111" stroke-width="1"/><g transform="translate(1054,316.5)"><path d="M2 11 V6 C 2 0.3, 10.5 0.3, 10.5 6 V11" stroke="#0a0a0a" stroke-width="3.8" fill="none"/><rect x="0.3" y="11" width="3.6" height="3" fill="#fff" stroke="#bbb" stroke-width="0.6"/><rect x="8.6" y="11" width="3.6" height="3" fill="#fff" stroke="#bbb" stroke-width="0.6"/></g><g transform="translate(1075,317.5)"><rect x="3" y="0.5" width="8" height="5" fill="#eee" stroke="#bbb"/><rect x="0.5" y="5" width="13" height="6" rx="1.5" fill="#e2e2e2" stroke="#b5b5b5"/><path d="M2 8.5 h10" stroke="#c5c5c5"/></g><g transform="translate(1096.5,317.5)"><path d="M-0.5 6.5 C 2 0.5, 13 0, 15.5 5.5 C 13 12, 3 12.5, -0.5 6.5 Z" fill="#111"/><path d="M2 6.5 C 4 3, 11 3, 13 6.5 C 11 9.5, 4 9.8, 2 6.5 Z" fill="#fff"/><circle cx="8" cy="6.3" r="2.6" fill="#111"/><path d="M8 4.5 v2.8" stroke="#fff" stroke-width="0.8"/></g><g transform="translate(1119,316.5)"><circle cx="7" cy="7" r="4" fill="#f5c020"/><path d="M7 0 v2 M7 12 v2 M0 7 h2 M12 7 h2 M2 2 l1.5 1.5 M10.5 10.5 l1.5 1.5 M12 2 l-1.5 1.5 M2 12 l1.5 -1.5" stroke="#f0c080" stroke-width="1"/></g><g transform="translate(1142.5,316.5)"><path d="M2.5 6 V4 C 2.5 0.5, 8.5 0.5, 8.5 4 V6" stroke="#bdbdbd" stroke-width="1.8" fill="none"/><rect x="0.5" y="6" width="10" height="8" fill="#bdbdbd"/></g><g transform="translate(1031,296)"><path d="M2 14 L13 2" stroke="#8a5a20" stroke-width="4.2" stroke-linecap="round"/><path d="M2 14 L13 2" stroke="#e8a040" stroke-width="2.6" stroke-linecap="round"/><circle cx="13" cy="2" r="1.8" fill="#e03030"/><path d="M0.5 16 l1 -3 l2 2z" fill="#333"/></g><g transform="translate(1185.5,195)"><path d="M-0.5 6.5 C 2 0.5, 13 0, 15.5 5.5 C 13 12, 3 12.5, -0.5 6.5 Z" fill="#111"/><path d="M2 6.5 C 4 3, 11 3, 13 6.5 C 11 9.5, 4 9.8, 2 6.5 Z" fill="#fff"/><circle cx="8" cy="6.3" r="2.6" fill="#111"/><path d="M8 4.5 v2.8" stroke="#fff" stroke-width="0.8"/></g><g transform="translate(1209,195)"><path d="M-0.5 6.5 C 2 0.5, 13 0, 15.5 5.5 C 13 12, 3 12.5, -0.5 6.5 Z" fill="#a8a8a8"/><path d="M2 6.5 C 4 3, 11 3, 13 6.5 C 11 9.5, 4 9.8, 2 6.5 Z" fill="#fff"/><circle cx="8" cy="6.3" r="2.6" fill="#a8a8a8"/><path d="M8 4.5 v2.8" stroke="#fff" stroke-width="0.8"/></g><path d="M1234 201.5 h12 M1240 195.5 v12" stroke="#e01818" stroke-width="2.6"/><path d="M1258 201.5 h11.5" stroke="#e01818" stroke-width="2.6"/><text x="1278.5" y="207" font-size="12" font-family="Liberation Sans" fill="#333">a</text><line x1="1287" y1="193.5" x2="1287" y2="208" stroke="#333" stroke-width="1"/><text x="1288.5" y="207" font-size="12" font-family="Liberation Sans" fill="#333">b</text><g transform="translate(1303,193)"><path d="M2 14 L13 2" stroke="#8a5a20" stroke-width="4.2" stroke-linecap="round"/><path d="M2 14 L13 2" stroke="#e8a040" stroke-width="2.6" stroke-linecap="round"/><circle cx="13" cy="2" r="1.8" fill="#e03030"/><path d="M0.5 16 l1 -3 l2 2z" fill="#333"/></g><path d="M1330 195 h5 v9" stroke="#f6f6f6" stroke-width="3" fill="none"/><path d="M1331 203 l4 4 l4 -4" stroke="#bbb" stroke-width="1.6" fill="none"/><rect x="1352.5" y="195.5" width="10" height="10" fill="#f09060" stroke="#f04848" stroke-width="1.3"/><path d="M1354.5 197.5 l6 6 M1360.5 197.5 l-6 6" stroke="#fff" stroke-width="1.6"/><path d="M1356.5 225 l4 -4 l4 4" stroke="#444" stroke-width="1.8" fill="none"/><path d="M1356.5 320 l4 4 l4 -4" stroke="#444" stroke-width="1.8" fill="none"/><g transform="translate(1185.5,217.5)"><path d="M-0.5 6.5 C 2 0.5, 13 0, 15.5 5.5 C 13 12, 3 12.5, -0.5 6.5 Z" fill="#111"/><path d="M2 6.5 C 4 3, 11 3, 13 6.5 C 11 9.5, 4 9.8, 2 6.5 Z" fill="#fff"/><circle cx="8" cy="6.3" r="2.6" fill="#111"/><path d="M8 4.5 v2.8" stroke="#fff" stroke-width="0.8"/></g><g transform="translate(1185.5,237.5)"><path d="M-0.5 6.5 C 2 0.5, 13 0, 15.5 5.5 C 13 12, 3 12.5, -0.5 6.5 Z" fill="#111"/><path d="M2 6.5 C 4 3, 11 3, 13 6.5 C 11 9.5, 4 9.8, 2 6.5 Z" fill="#fff"/><circle cx="8" cy="6.3" r="2.6" fill="#111"/><path d="M8 4.5 v2.8" stroke="#fff" stroke-width="0.8"/></g><g transform="translate(1185.5,257.5)"><path d="M-0.5 6.5 C 2 0.5, 13 0, 15.5 5.5 C 13 12, 3 12.5, -0.5 6.5 Z" fill="#111"/><path d="M2 6.5 C 4 3, 11 3, 13 6.5 C 11 9.5, 4 9.8, 2 6.5 Z" fill="#fff"/><circle cx="8" cy="6.3" r="2.6" fill="#111"/><path d="M8 4.5 v2.8" stroke="#fff" stroke-width="0.8"/></g><g transform="translate(1185.5,277.5)"><path d="M-0.5 6.5 C 2 0.5, 13 0, 15.5 5.5 C 13 12, 3 12.5, -0.5 6.5 Z" fill="#111"/><path d="M2 6.5 C 4 3, 11 3, 13 6.5 C 11 9.5, 4 9.8, 2 6.5 Z" fill="#fff"/><circle cx="8" cy="6.3" r="2.6" fill="#111"/><path d="M8 4.5 v2.8" stroke="#fff" stroke-width="0.8"/></g><g transform="translate(1185.5,297.5)"><path d="M-0.5 6.5 C 2 0.5, 13 0, 15.5 5.5 C 13 12, 3 12.5, -0.5 6.5 Z" fill="#111"/><path d="M2 6.5 C 4 3, 11 3, 13 6.5 C 11 9.5, 4 9.8, 2 6.5 Z" fill="#fff"/><circle cx="8" cy="6.3" r="2.6" fill="#111"/><path d="M8 4.5 v2.8" stroke="#fff" stroke-width="0.8"/></g><g transform="translate(1185.5,317.5)"><path d="M-0.5 6.5 C 2 0.5, 13 0, 15.5 5.5 C 13 12, 3 12.5, -0.5 6.5 Z" fill="#1a2a50"/><path d="M2 6.5 C 4 3, 11 3, 13 6.5 C 11 9.5, 4 9.8, 2 6.5 Z" fill="#fff"/><circle cx="8" cy="6.3" r="2.6" fill="#1a2a50"/><path d="M8 4.5 v2.8" stroke="#fff" stroke-width="0.8"/></g><g transform="translate(1207,315)"><path d="M2 14 L13 2" stroke="#8a5a20" stroke-width="4.2" stroke-linecap="round"/><path d="M2 14 L13 2" stroke="#a0a0a0" stroke-width="2.6" stroke-linecap="round"/><circle cx="13" cy="2" r="1.8" fill="#888"/><path d="M0.5 16 l1 -3 l2 2z" fill="#333"/></g><rect x="1334.5" y="341.5" width="6" height="5" fill="none" stroke="#222" stroke-width="1"/><path d="M1334 341.5 h7" stroke="#222" stroke-width="2"/><rect x="1332.5" y="344.5" width="5.5" height="5" fill="#dcdcdc" stroke="#222" stroke-width="1"/><path d="M1332 345 h6.5" stroke="#222" stroke-width="2"/><path d="M1353.5 342.5 l7.5 7.5 M1361 342.5 l-7.5 7.5" stroke="#333" stroke-width="1.7"/><path d="M1356.5 371 l4 -4 l4 4" stroke="#444" stroke-width="1.8" fill="none"/><path d="M1356.5 703 l4 4 l4 -4" stroke="#444" stroke-width="1.8" fill="none"/><path d="M1329.5 375.0 l4.2 4.2 l4.2 -4.2" stroke="#333" stroke-width="1.1" fill="none"/><path d="M1290.5 422.0 l4.2 4.2 l4.2 -4.2" stroke="#aaa" stroke-width="1.1" fill="none"/><path d="M1315 419.5 h14 M1315 424 h14 M1315 428.5 h14" stroke="#a8a8a8" stroke-width="1.6"/><path d="M1319.5 445.0 l4.2 4.2 l4.2 -4.2" stroke="#333" stroke-width="1.1" fill="none"/><rect x="1071.5" y="441.5" width="15" height="10" fill="#fff" stroke="#111"/><path d="M1319.5 468.5 l4.2 4.2 l4.2 -4.2" stroke="#333" stroke-width="1.1" fill="none"/><line x1="1071" y1="470.5" x2="1087" y2="470.5" stroke="#111" stroke-width="1"/><path d="M1319.5 491.0 l4.2 4.2 l4.2 -4.2" stroke="#333" stroke-width="1.1" fill="none"/><path d="M1319.5 635.0 l4.2 4.2 l4.2 -4.2" stroke="#333" stroke-width="1.1" fill="none"/><rect x="1374.5" y="171.5" width="2" height="2" fill="#fff"/><rect x="1375" y="172" width="1.6" height="1.6" fill="#9a9a9a"/><rect x="1378.5" y="171.5" width="2" height="2" fill="#fff"/><rect x="1379" y="172" width="1.6" height="1.6" fill="#9a9a9a"/><rect x="1382.5" y="171.5" width="2" height="2" fill="#fff"/><rect x="1383" y="172" width="1.6" height="1.6" fill="#9a9a9a"/><rect x="1386.5" y="171.5" width="2" height="2" fill="#fff"/><rect x="1387" y="172" width="1.6" height="1.6" fill="#9a9a9a"/><rect x="1390.5" y="171.5" width="2" height="2" fill="#fff"/><rect x="1391" y="172" width="1.6" height="1.6" fill="#9a9a9a"/><rect x="1394.5" y="171.5" width="2" height="2" fill="#fff"/><rect x="1395" y="172" width="1.6" height="1.6" fill="#9a9a9a"/><rect x="1398.5" y="171.5" width="2" height="2" fill="#fff"/><rect x="1399" y="172" width="1.6" height="1.6" fill="#9a9a9a"/><rect x="1402.5" y="171.5" width="2" height="2" fill="#fff"/><rect x="1403" y="172" width="1.6" height="1.6" fill="#9a9a9a"/><text x="1387" y="188" font-size="12" font-family="Liberation Sans" fill="#111">x,y</text><line x1="1376" y1="192.5" x2="1398" y2="192.5" stroke="#777" stroke-width="1"/><line x1="1398" y1="193" x2="1398" y2="206" stroke="#b0b0b0" stroke-width="1.6"/><circle cx="1398" cy="192.5" r="2.1" fill="#f00"/><text x="1376" y="222" font-size="12" font-family="Liberation Sans" fill="#111">@x,y</text><line x1="1376" y1="226" x2="1398" y2="226" stroke="#777" stroke-width="1"/><line x1="1398" y1="226" x2="1398" y2="239" stroke="#b0b0b0" stroke-width="1.6"/><circle cx="1398" cy="226" r="2.1" fill="#f00"/><g transform="translate(1376,258)"><line x1="2" y1="2.5" x2="21" y2="11" stroke="#111" stroke-width="1.3"/><path d="M4 1.5 l5 0.5 l-2 3z M19 12 l-5 -0.5 l2 -3z" fill="#111"/><circle cx="2" cy="2.5" r="2.1" fill="#f00"/><circle cx="21" cy="11" r="2.1" fill="#f00"/></g><g transform="translate(1376,290)"><line x1="0.5" y1="13" x2="6" y2="1" stroke="#f02020" stroke-width="1.2"/><line x1="4" y1="7" x2="21" y2="15" stroke="#111" stroke-width="1.3"/><path d="M4 6.5 l5 0 l-2 3z M19 15 l-5 -0.5 l2 -3z" fill="#111"/><circle cx="21" cy="15" r="2.1" fill="#f00"/></g><g transform="translate(1376,320)"><path d="M0 10 C 5 11, 7 16, 6 22" stroke="#f02020" stroke-width="1.2" fill="none"/><line x1="15" y1="3" x2="21" y2="16" stroke="#f02020" stroke-width="1.2"/><line x1="7" y1="16" x2="17" y2="9" stroke="#111" stroke-width="1.3"/></g><g transform="translate(1378,362)"><line x1="0.5" y1="9" x2="4" y2="1" stroke="#111" stroke-width="1.2"/><line x1="4" y1="15.5" x2="17" y2="15.5" stroke="#555" stroke-width="1.4"/><path d="M5 2 C 10 4, 13 8, 14 13" stroke="#f02020" stroke-width="1.2" fill="none"/><path d="M4 1 l4 0 l-2 3z M12 12 l3 3 l1 -4z" fill="#f02020"/></g><text x="1381" y="417" font-size="17" font-family="Liberation Serif" fill="#555">&#931;</text><path d="M1378.5 456.5 V447.5 L1385 441.5 H1397.5 V456.5 Z" fill="#f00" stroke="#222" stroke-width="1"/><path d="M1384 489 C 1376 484, 1379 472, 1386 471.5 C 1390 471, 1395 472, 1397 474 Z" fill="#f00" stroke="#222" stroke-width="1"/><path d="M1378.5 523.5 V513 C 1378.5 504, 1397.5 504, 1397.5 513 V523.5 Z" fill="#f00" stroke="#222" stroke-width="1"/><path d="M300.5 732 C 300.5 718, 317.5 718, 317.5 732 V740 C 317.5 756, 300.5 756, 300.5 740 Z" fill="#fff" stroke="#555" stroke-width="1"/><path d="M300.5 736 Q 309 733 317.5 736" stroke="#555" fill="none"/><rect x="307" y="724" width="4" height="8" rx="2" fill="none" stroke="#555" stroke-width="0.9"/><line x1="309" y1="722" x2="309" y2="736" stroke="#555" stroke-width="0.8"/><rect x="1396" y="755" width="2" height="2" fill="#bdbdbd"/><rect x="1400" y="755" width="2" height="2" fill="#bdbdbd"/><rect x="1404" y="755" width="2" height="2" fill="#bdbdbd"/><rect x="1400" y="751" width="2" height="2" fill="#bdbdbd"/><rect x="1404" y="751" width="2" height="2" fill="#bdbdbd"/><rect x="1404" y="747" width="2" height="2" fill="#bdbdbd"/><circle cx="460" cy="767" r="2.3" fill="none" stroke="#555" stroke-width="1.1"/><circle cx="460" cy="787" r="2.3" fill="none" stroke="#555" stroke-width="1.1"/><path d="M613 764 l4.5 4.5 l4.5 -4.5" stroke="#444" stroke-width="1.6" fill="none"/><rect x="649.5" y="759.5" width="11" height="9" fill="#fff" stroke="#888"/><path d="M1377.5 764 l4 4 l4 -4" stroke="#444" stroke-width="1.6" fill="none"/><rect x="1342.5" y="773.5" width="21" height="21" fill="#cce8ff" stroke="#3a90e0"/><path d="M1346.5 777.5 h2.5 v2.5 h-2.5z M1346.5 781.5 h2.5 v2.5 h-2.5z M1346.5 785.5 h2.5 v2.5 h-2.5z M1351 779 h3.5 M1356 779 h3.5 M1351 783 h3.5 M1356 783 h3.5 M1351 787 h3.5 M1356 787 h3.5" stroke="#666" stroke-width="1" fill="none"/><rect x="1368.5" y="777.5" width="13" height="11" fill="#fff" stroke="#777"/><rect x="1370" y="779" width="10" height="8" fill="#7ab0e0"/><path d="M1370 787 L1373 782 L1376 785 L1380 781 V787 Z" fill="#2a4a5a"/></svg>
</div></body></html>
